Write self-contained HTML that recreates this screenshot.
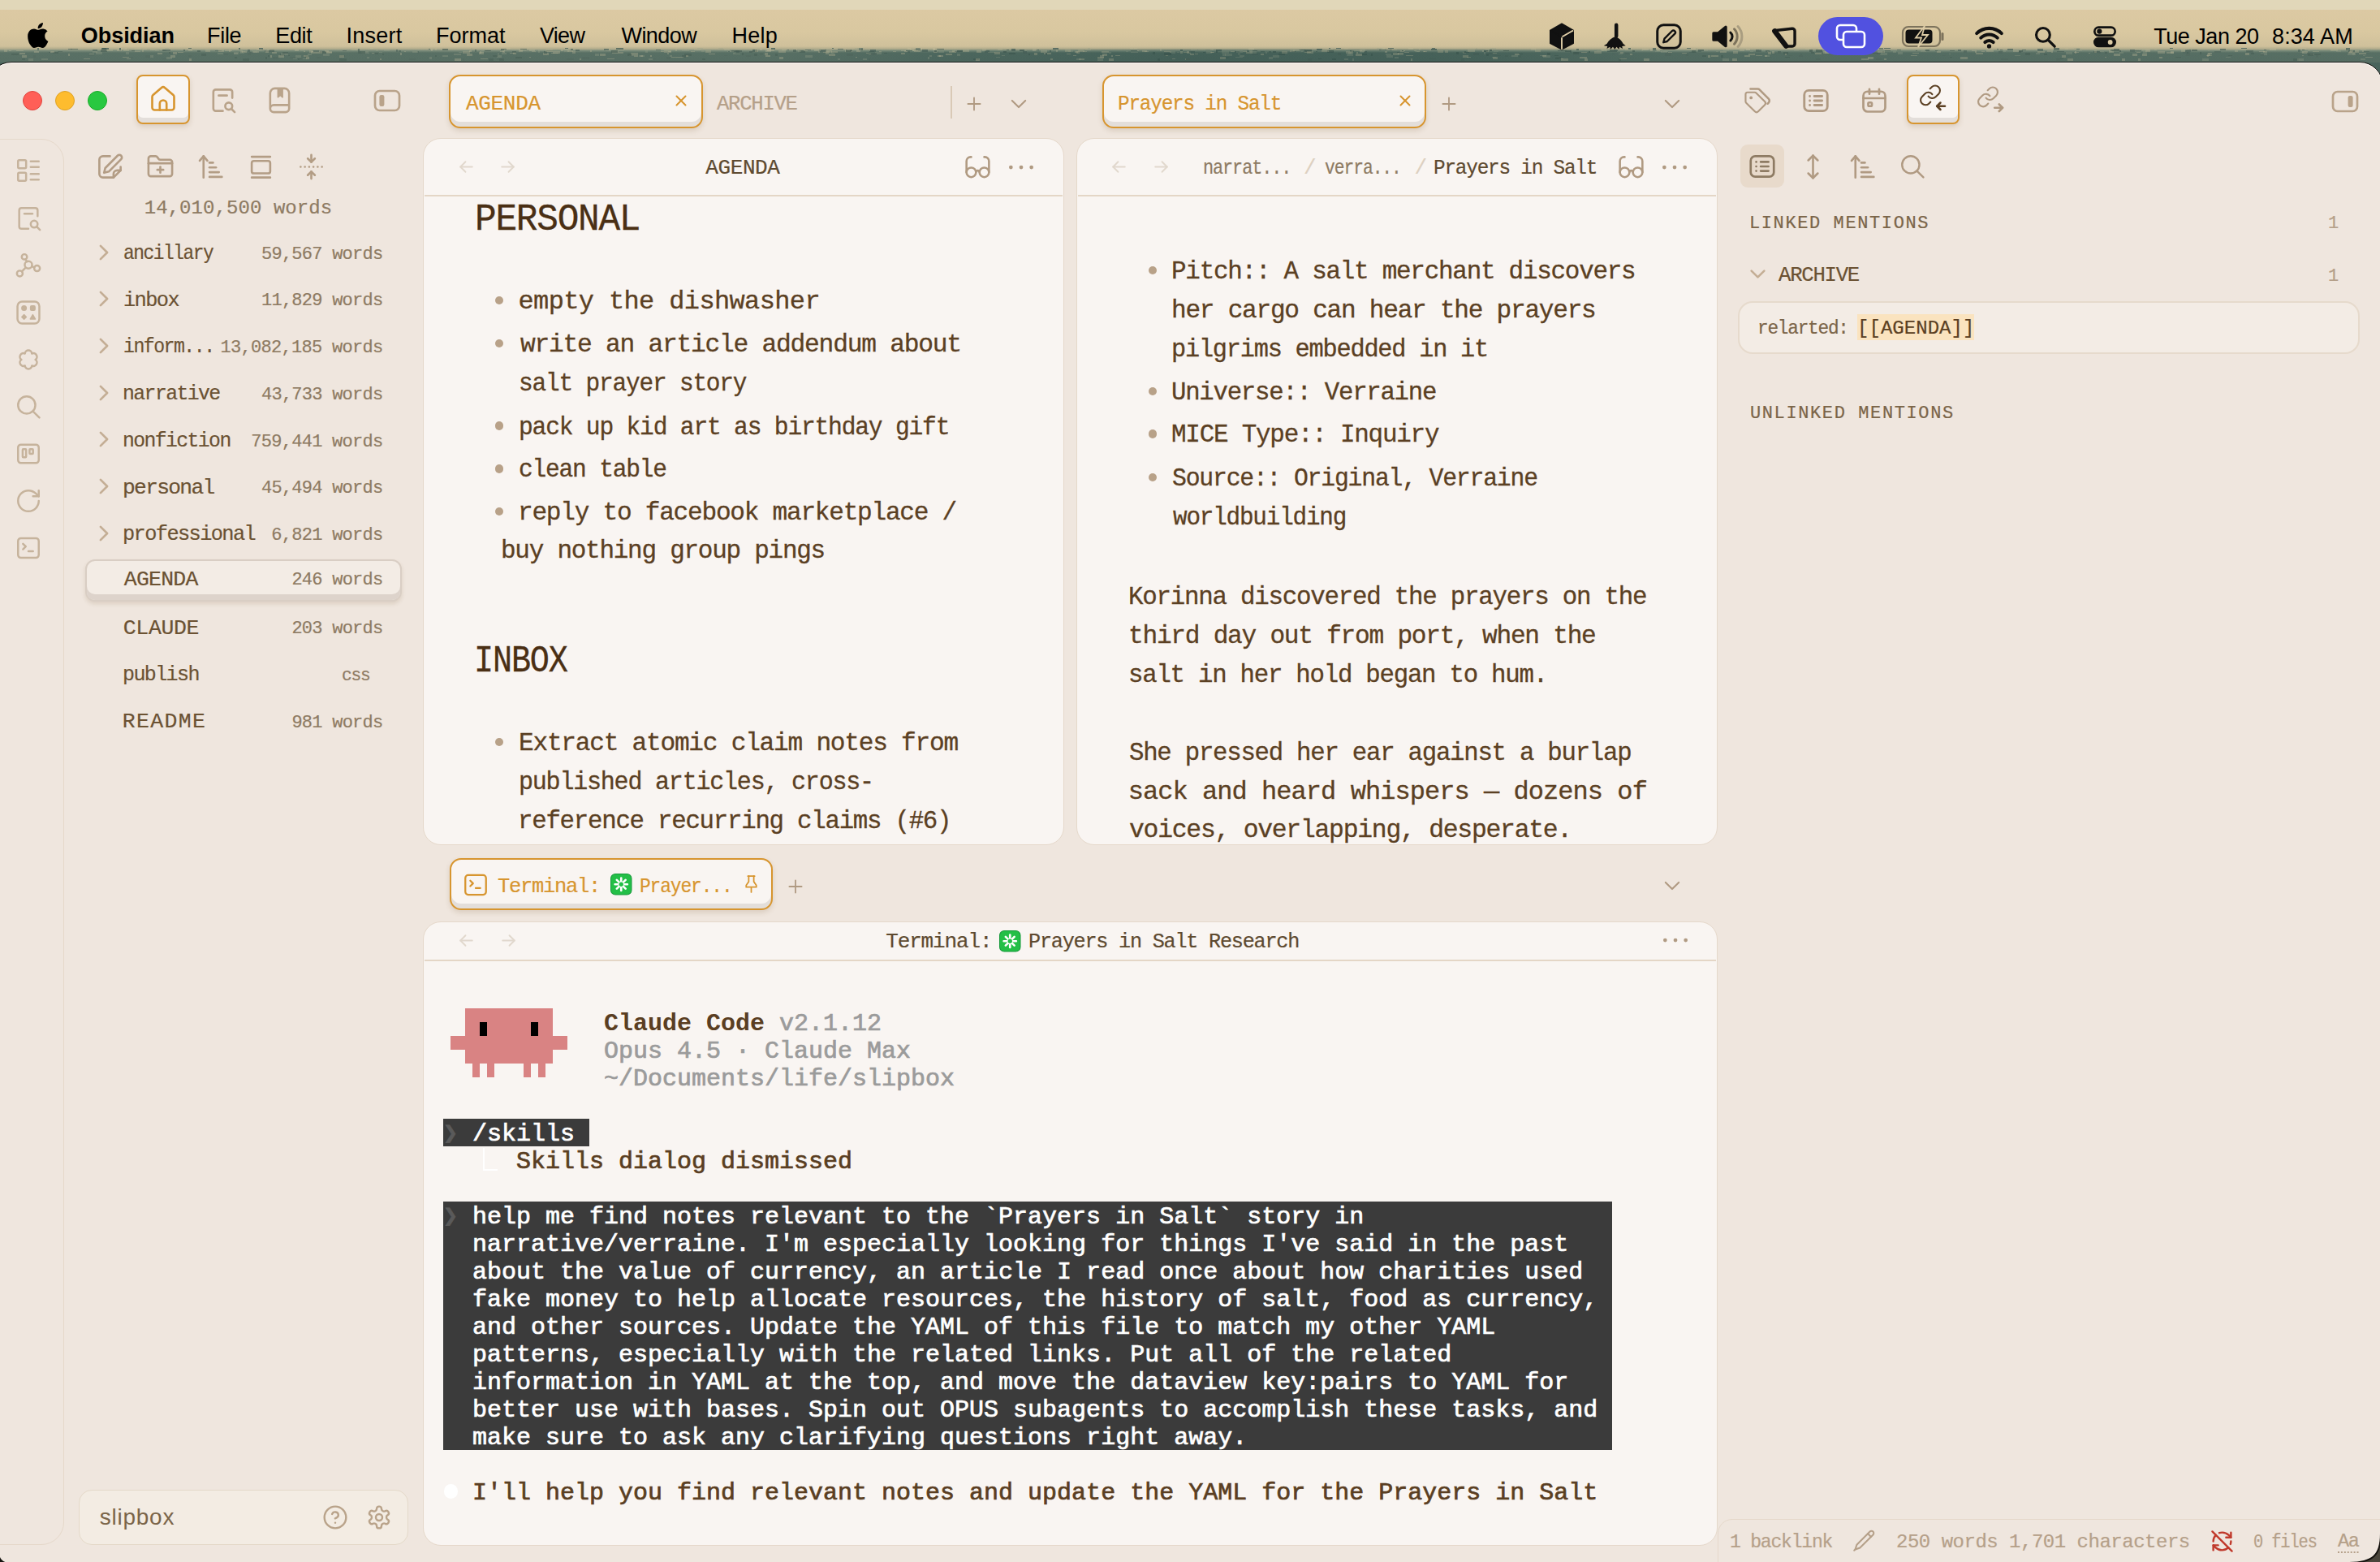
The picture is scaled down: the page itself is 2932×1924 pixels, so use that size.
<!DOCTYPE html>
<html lang="en"><head><meta charset="utf-8"><title>Obsidian</title>
<style>
html,body{margin:0;padding:0}
body{width:2932px;height:1924px;background:#2b2721;font-family:"Liberation Mono","DejaVu Sans Mono",monospace;color:#5B4023}
#screen{position:relative;width:2932px;height:1924px;overflow:hidden;background:#2b2721}
body *{box-sizing:border-box}
div,svg.ic,span.t{position:absolute}
svg.ic{overflow:visible}
span.t{white-space:pre;line-height:1;display:block;transform-origin:0 50%}
span.t{-webkit-text-stroke:.22px}
span.b{-webkit-text-stroke:.32px}
span.s{font-family:"Liberation Sans","DejaVu Sans",sans-serif;-webkit-text-stroke:0}
.pane{background:#F9F5F2;border:1.600px solid #E5D8CA;border-radius:22px}
.hdrline{background:#E4D6C6;height:2px}
.tab{background:#F9F5F2;border:2px solid #D7952F;border-radius:14px;box-shadow:inset 0 -6px 0 #E3DEDA, 0 3px 6px rgba(120,90,50,.18)}
</style></head>
<body>
<div id="screen">
<section id="desktop-wallpaper">
<div class="" style="left:0.0px;top:0.0px;width:2932.0px;height:110.0px;background:linear-gradient(to bottom,#E1D7B9 0,#E1D7B9 11.5px,#DCC9A3 12px,#D9C8A0 40px,#CFC09B 57px,#B3AD8C 60px,#6F8374 62.500px,#4A655C 65px,#44605A 100%)"></div>
<svg class="ic" style="left:0;top:0;width:2932px;height:78px" viewBox="0 0 2932 78"><rect x="1326" y="63" width="4" height="3" fill="rgba(190,185,150,.32)"/><rect x="296" y="62" width="3" height="3" fill="rgba(190,185,150,.32)"/><rect x="2078" y="59" width="5" height="1" fill="rgba(60,85,78,.7)"/><rect x="1712" y="61" width="3" height="1" fill="rgba(70,95,88,.8)"/><rect x="1738" y="72" width="2" height="3" fill="rgba(190,185,150,.32)"/><rect x="914" y="65" width="2" height="3" fill="rgba(60,85,78,.7)"/><rect x="203" y="59" width="5" height="3" fill="rgba(150,160,135,.3)"/><rect x="1186" y="61" width="8" height="3" fill="rgba(190,185,150,.32)"/><rect x="2338" y="64" width="6" height="3" fill="rgba(150,160,135,.3)"/><rect x="422" y="62" width="5" height="1" fill="rgba(70,95,88,.8)"/><rect x="2916" y="65" width="3" height="1" fill="rgba(70,95,88,.8)"/><rect x="843" y="66" width="9" height="3" fill="rgba(60,85,78,.7)"/><rect x="1286" y="65" width="9" height="2" fill="rgba(205,195,160,.3)"/><rect x="1227" y="70" width="5" height="1" fill="rgba(150,160,135,.3)"/><rect x="335" y="64" width="6" height="2" fill="rgba(205,195,160,.3)"/><rect x="1838" y="65" width="6" height="1" fill="rgba(190,185,150,.32)"/><rect x="2096" y="61" width="8" height="2" fill="rgba(150,160,135,.3)"/><rect x="2002" y="59" width="8" height="3" fill="rgba(190,185,150,.32)"/><rect x="2285" y="62" width="7" height="3" fill="rgba(205,195,160,.3)"/><rect x="2434" y="65" width="9" height="2" fill="rgba(190,185,150,.32)"/><rect x="383" y="63" width="6" height="3" fill="rgba(190,185,150,.32)"/><rect x="248" y="66" width="6" height="3" fill="rgba(60,85,78,.7)"/><rect x="1165" y="66" width="8" height="2" fill="rgba(190,185,150,.32)"/><rect x="1891" y="61" width="7" height="3" fill="rgba(190,185,150,.32)"/><rect x="2022" y="61" width="2" height="2" fill="rgba(150,160,135,.3)"/><rect x="1014" y="63" width="8" height="2" fill="rgba(190,185,150,.32)"/><rect x="681" y="63" width="9" height="3" fill="rgba(205,195,160,.3)"/><rect x="560" y="72" width="8" height="3" fill="rgba(205,195,160,.3)"/><rect x="2893" y="62" width="8" height="3" fill="rgba(60,85,78,.7)"/><rect x="945" y="60" width="4" height="1" fill="rgba(150,160,135,.3)"/><rect x="950" y="59" width="5" height="2" fill="rgba(70,95,88,.8)"/><rect x="746" y="62" width="6" height="1" fill="rgba(150,160,135,.3)"/><rect x="1716" y="65" width="7" height="3" fill="rgba(205,195,160,.3)"/><rect x="514" y="63" width="2" height="3" fill="rgba(70,95,88,.8)"/><rect x="1607" y="63" width="8" height="2" fill="rgba(190,185,150,.32)"/><rect x="1972" y="59" width="8" height="1" fill="rgba(190,185,150,.32)"/><rect x="855" y="61" width="9" height="1" fill="rgba(205,195,160,.3)"/><rect x="2460" y="60" width="2" height="1" fill="rgba(70,95,88,.8)"/><rect x="619" y="62" width="3" height="3" fill="rgba(190,185,150,.32)"/><rect x="288" y="65" width="5" height="2" fill="rgba(150,160,135,.3)"/><rect x="2598" y="62" width="6" height="3" fill="rgba(205,195,160,.3)"/><rect x="1942" y="60" width="3" height="2" fill="rgba(60,85,78,.7)"/><rect x="1967" y="62" width="9" height="1" fill="rgba(150,160,135,.3)"/><rect x="418" y="68" width="7" height="2" fill="rgba(60,85,78,.7)"/><rect x="2834" y="64" width="4" height="1" fill="rgba(150,160,135,.3)"/><rect x="2163" y="61" width="7" height="3" fill="rgba(70,95,88,.8)"/><rect x="110" y="66" width="6" height="1" fill="rgba(205,195,160,.3)"/><rect x="2123" y="61" width="7" height="2" fill="rgba(150,160,135,.3)"/><rect x="2181" y="66" width="7" height="1" fill="rgba(70,95,88,.8)"/><rect x="799" y="72" width="5" height="2" fill="rgba(150,160,135,.3)"/><rect x="818" y="62" width="9" height="3" fill="rgba(190,185,150,.32)"/><rect x="114" y="63" width="6" height="2" fill="rgba(150,160,135,.3)"/><rect x="2836" y="63" width="7" height="3" fill="rgba(205,195,160,.3)"/><rect x="1493" y="61" width="3" height="1" fill="rgba(150,160,135,.3)"/><rect x="1925" y="62" width="5" height="1" fill="rgba(60,85,78,.7)"/><rect x="2556" y="63" width="2" height="3" fill="rgba(205,195,160,.3)"/><rect x="2634" y="72" width="3" height="3" fill="rgba(190,185,150,.32)"/><rect x="1591" y="63" width="5" height="1" fill="rgba(60,85,78,.7)"/><rect x="2604" y="60" width="7" height="3" fill="rgba(60,85,78,.7)"/><rect x="1897" y="68" width="8" height="1" fill="rgba(150,160,135,.3)"/><rect x="696" y="59" width="4" height="1" fill="rgba(70,95,88,.8)"/><rect x="1906" y="65" width="4" height="3" fill="rgba(60,85,78,.7)"/><rect x="2692" y="61" width="7" height="3" fill="rgba(70,95,88,.8)"/><rect x="536" y="59" width="2" height="3" fill="rgba(190,185,150,.32)"/><rect x="2156" y="63" width="4" height="1" fill="rgba(150,160,135,.3)"/><rect x="114" y="61" width="6" height="2" fill="rgba(70,95,88,.8)"/><rect x="985" y="62" width="7" height="3" fill="rgba(60,85,78,.7)"/><rect x="536" y="68" width="2" height="2" fill="rgba(60,85,78,.7)"/><rect x="2713" y="72" width="8" height="3" fill="rgba(150,160,135,.3)"/><rect x="2178" y="64" width="4" height="3" fill="rgba(190,185,150,.32)"/><rect x="1802" y="65" width="4" height="1" fill="rgba(150,160,135,.3)"/><rect x="705" y="63" width="4" height="3" fill="rgba(190,185,150,.32)"/><rect x="2279" y="62" width="2" height="3" fill="rgba(70,95,88,.8)"/><rect x="2173" y="70" width="9" height="1" fill="rgba(70,95,88,.8)"/><rect x="232" y="61" width="5" height="2" fill="rgba(190,185,150,.32)"/><rect x="400" y="64" width="9" height="1" fill="rgba(190,185,150,.32)"/><rect x="1815" y="65" width="7" height="3" fill="rgba(70,95,88,.8)"/><rect x="2097" y="68" width="5" height="2" fill="rgba(60,85,78,.7)"/><rect x="2081" y="64" width="9" height="1" fill="rgba(70,95,88,.8)"/><rect x="1063" y="72" width="5" height="2" fill="rgba(150,160,135,.3)"/><rect x="1706" y="63" width="3" height="2" fill="rgba(205,195,160,.3)"/><rect x="297" y="63" width="5" height="1" fill="rgba(150,160,135,.3)"/><rect x="2742" y="70" width="6" height="1" fill="rgba(150,160,135,.3)"/><rect x="2635" y="61" width="7" height="2" fill="rgba(150,160,135,.3)"/><rect x="1915" y="68" width="5" height="1" fill="rgba(60,85,78,.7)"/><rect x="1995" y="66" width="4" height="1" fill="rgba(150,160,135,.3)"/><rect x="2893" y="64" width="8" height="2" fill="rgba(205,195,160,.3)"/><rect x="1725" y="62" width="5" height="2" fill="rgba(190,185,150,.32)"/><rect x="1498" y="62" width="2" height="3" fill="rgba(60,85,78,.7)"/><rect x="1804" y="63" width="2" height="2" fill="rgba(70,95,88,.8)"/><rect x="2555" y="64" width="6" height="1" fill="rgba(190,185,150,.32)"/><rect x="936" y="60" width="3" height="2" fill="rgba(205,195,160,.3)"/><rect x="162" y="62" width="4" height="1" fill="rgba(60,85,78,.7)"/><rect x="2768" y="63" width="6" height="1" fill="rgba(70,95,88,.8)"/><rect x="2108" y="68" width="9" height="2" fill="rgba(190,185,150,.32)"/><rect x="1143" y="70" width="2" height="3" fill="rgba(150,160,135,.3)"/><rect x="1742" y="62" width="3" height="1" fill="rgba(190,185,150,.32)"/><rect x="1067" y="65" width="3" height="1" fill="rgba(190,185,150,.32)"/><rect x="1083" y="63" width="3" height="1" fill="rgba(205,195,160,.3)"/><rect x="2265" y="62" width="8" height="3" fill="rgba(150,160,135,.3)"/><rect x="176" y="60" width="5" height="1" fill="rgba(205,195,160,.3)"/><rect x="206" y="61" width="4" height="2" fill="rgba(205,195,160,.3)"/><rect x="2175" y="62" width="5" height="2" fill="rgba(70,95,88,.8)"/><rect x="2753" y="62" width="4" height="2" fill="rgba(190,185,150,.32)"/><rect x="1025" y="59" width="2" height="1" fill="rgba(70,95,88,.8)"/><rect x="2257" y="64" width="5" height="2" fill="rgba(150,160,135,.3)"/><rect x="1831" y="66" width="3" height="3" fill="rgba(60,85,78,.7)"/><rect x="2689" y="64" width="9" height="2" fill="rgba(70,95,88,.8)"/><rect x="1260" y="61" width="5" height="2" fill="rgba(150,160,135,.3)"/><rect x="2894" y="63" width="4" height="2" fill="rgba(190,185,150,.32)"/><rect x="531" y="60" width="2" height="3" fill="rgba(205,195,160,.3)"/><rect x="1764" y="59" width="4" height="1" fill="rgba(60,85,78,.7)"/><rect x="2072" y="65" width="6" height="1" fill="rgba(205,195,160,.3)"/><rect x="185" y="61" width="9" height="1" fill="rgba(205,195,160,.3)"/><rect x="1826" y="62" width="2" height="2" fill="rgba(205,195,160,.3)"/><rect x="2240" y="61" width="7" height="1" fill="rgba(205,195,160,.3)"/><rect x="892" y="61" width="7" height="1" fill="rgba(205,195,160,.3)"/><rect x="1563" y="63" width="3" height="2" fill="rgba(70,95,88,.8)"/><rect x="2687" y="61" width="5" height="3" fill="rgba(190,185,150,.32)"/><rect x="372" y="72" width="6" height="1" fill="rgba(150,160,135,.3)"/><rect x="1636" y="63" width="2" height="1" fill="rgba(205,195,160,.3)"/><rect x="1246" y="60" width="5" height="3" fill="rgba(70,95,88,.8)"/><rect x="635" y="70" width="8" height="2" fill="rgba(60,85,78,.7)"/><rect x="612" y="68" width="6" height="3" fill="rgba(150,160,135,.3)"/><rect x="179" y="68" width="8" height="3" fill="rgba(70,95,88,.8)"/><rect x="570" y="72" width="2" height="3" fill="rgba(70,95,88,.8)"/><rect x="2913" y="60" width="5" height="1" fill="rgba(190,185,150,.32)"/><rect x="545" y="60" width="7" height="2" fill="rgba(60,85,78,.7)"/><rect x="2287" y="66" width="2" height="1" fill="rgba(70,95,88,.8)"/><rect x="2788" y="63" width="5" height="2" fill="rgba(190,185,150,.32)"/><rect x="1871" y="68" width="3" height="3" fill="rgba(70,95,88,.8)"/><rect x="376" y="68" width="3" height="3" fill="rgba(60,85,78,.7)"/><rect x="1032" y="72" width="3" height="2" fill="rgba(150,160,135,.3)"/><rect x="840" y="68" width="5" height="3" fill="rgba(60,85,78,.7)"/><rect x="2023" y="60" width="8" height="2" fill="rgba(205,195,160,.3)"/><rect x="191" y="60" width="5" height="3" fill="rgba(150,160,135,.3)"/><rect x="1358" y="66" width="6" height="3" fill="rgba(205,195,160,.3)"/><rect x="2544" y="59" width="4" height="2" fill="rgba(190,185,150,.32)"/><rect x="1989" y="66" width="6" height="1" fill="rgba(150,160,135,.3)"/><rect x="2767" y="62" width="9" height="3" fill="rgba(70,95,88,.8)"/><rect x="1169" y="63" width="9" height="2" fill="rgba(190,185,150,.32)"/><rect x="2249" y="62" width="5" height="1" fill="rgba(60,85,78,.7)"/><rect x="71" y="63" width="6" height="1" fill="rgba(70,95,88,.8)"/><rect x="1840" y="63" width="6" height="1" fill="rgba(150,160,135,.3)"/><rect x="305" y="61" width="3" height="3" fill="rgba(70,95,88,.8)"/><rect x="1072" y="61" width="7" height="3" fill="rgba(70,95,88,.8)"/><rect x="1145" y="68" width="3" height="2" fill="rgba(150,160,135,.3)"/><rect x="2039" y="63" width="9" height="1" fill="rgba(150,160,135,.3)"/><rect x="14" y="66" width="9" height="2" fill="rgba(60,85,78,.7)"/><rect x="1236" y="63" width="4" height="2" fill="rgba(60,85,78,.7)"/><rect x="1294" y="72" width="3" height="2" fill="rgba(190,185,150,.32)"/><rect x="1329" y="72" width="7" height="2" fill="rgba(190,185,150,.32)"/><rect x="801" y="68" width="2" height="2" fill="rgba(205,195,160,.3)"/><rect x="1524" y="63" width="3" height="2" fill="rgba(70,95,88,.8)"/><rect x="312" y="63" width="7" height="2" fill="rgba(190,185,150,.32)"/><rect x="1149" y="59" width="3" height="3" fill="rgba(205,195,160,.3)"/><rect x="2600" y="61" width="4" height="2" fill="rgba(60,85,78,.7)"/><rect x="2092" y="61" width="7" height="2" fill="rgba(60,85,78,.7)"/><rect x="118" y="64" width="8" height="3" fill="rgba(150,160,135,.3)"/><rect x="330" y="68" width="2" height="2" fill="rgba(60,85,78,.7)"/><rect x="2518" y="66" width="4" height="2" fill="rgba(60,85,78,.7)"/><rect x="200" y="61" width="4" height="2" fill="rgba(60,85,78,.7)"/><rect x="1407" y="62" width="6" height="2" fill="rgba(205,195,160,.3)"/><rect x="1663" y="62" width="5" height="2" fill="rgba(70,95,88,.8)"/><rect x="2739" y="60" width="8" height="1" fill="rgba(150,160,135,.3)"/><rect x="307" y="64" width="5" height="2" fill="rgba(70,95,88,.8)"/><rect x="901" y="62" width="9" height="2" fill="rgba(60,85,78,.7)"/><rect x="571" y="61" width="5" height="1" fill="rgba(150,160,135,.3)"/><rect x="1400" y="62" width="3" height="1" fill="rgba(205,195,160,.3)"/><rect x="1058" y="59" width="5" height="3" fill="rgba(60,85,78,.7)"/><rect x="1568" y="68" width="8" height="3" fill="rgba(150,160,135,.3)"/><rect x="1543" y="62" width="6" height="1" fill="rgba(60,85,78,.7)"/><rect x="1136" y="61" width="7" height="3" fill="rgba(70,95,88,.8)"/><rect x="2167" y="60" width="5" height="2" fill="rgba(150,160,135,.3)"/><rect x="1575" y="66" width="8" height="2" fill="rgba(60,85,78,.7)"/><rect x="1278" y="61" width="2" height="1" fill="rgba(60,85,78,.7)"/><rect x="2906" y="65" width="9" height="2" fill="rgba(190,185,150,.32)"/><rect x="299" y="72" width="8" height="3" fill="rgba(60,85,78,.7)"/><rect x="1838" y="70" width="5" height="1" fill="rgba(150,160,135,.3)"/><rect x="632" y="64" width="4" height="3" fill="rgba(190,185,150,.32)"/><rect x="2871" y="60" width="9" height="3" fill="rgba(190,185,150,.32)"/><rect x="5" y="61" width="4" height="3" fill="rgba(190,185,150,.32)"/><rect x="2643" y="61" width="6" height="3" fill="rgba(205,195,160,.3)"/><rect x="2163" y="68" width="8" height="1" fill="rgba(190,185,150,.32)"/><rect x="288" y="64" width="6" height="3" fill="rgba(150,160,135,.3)"/><rect x="1589" y="61" width="6" height="3" fill="rgba(190,185,150,.32)"/><rect x="42" y="63" width="6" height="2" fill="rgba(205,195,160,.3)"/><rect x="2640" y="63" width="5" height="3" fill="rgba(150,160,135,.3)"/><rect x="2240" y="59" width="5" height="2" fill="rgba(205,195,160,.3)"/><rect x="226" y="61" width="2" height="2" fill="rgba(60,85,78,.7)"/><rect x="332" y="61" width="6" height="3" fill="rgba(60,85,78,.7)"/><rect x="1516" y="63" width="5" height="1" fill="rgba(205,195,160,.3)"/><rect x="1722" y="66" width="7" height="2" fill="rgba(150,160,135,.3)"/><rect x="27" y="68" width="6" height="3" fill="rgba(190,185,150,.32)"/><rect x="840" y="61" width="9" height="2" fill="rgba(150,160,135,.3)"/><rect x="945" y="61" width="9" height="2" fill="rgba(205,195,160,.3)"/><rect x="446" y="65" width="9" height="1" fill="rgba(150,160,135,.3)"/><rect x="1986" y="66" width="8" height="1" fill="rgba(70,95,88,.8)"/><rect x="599" y="59" width="8" height="1" fill="rgba(190,185,150,.32)"/><rect x="2441" y="63" width="4" height="1" fill="rgba(190,185,150,.32)"/><rect x="754" y="63" width="8" height="3" fill="rgba(205,195,160,.3)"/><rect x="463" y="61" width="3" height="2" fill="rgba(150,160,135,.3)"/><rect x="759" y="59" width="9" height="2" fill="rgba(60,85,78,.7)"/><rect x="1531" y="63" width="7" height="1" fill="rgba(190,185,150,.32)"/><rect x="11" y="62" width="3" height="1" fill="rgba(205,195,160,.3)"/><rect x="1721" y="64" width="3" height="1" fill="rgba(60,85,78,.7)"/><rect x="1460" y="72" width="6" height="2" fill="rgba(190,185,150,.32)"/><rect x="201" y="61" width="9" height="2" fill="rgba(70,95,88,.8)"/><rect x="1828" y="62" width="5" height="2" fill="rgba(60,85,78,.7)"/><rect x="124" y="61" width="8" height="3" fill="rgba(60,85,78,.7)"/><rect x="166" y="59" width="8" height="2" fill="rgba(190,185,150,.32)"/><rect x="253" y="61" width="6" height="3" fill="rgba(190,185,150,.32)"/><rect x="2480" y="62" width="7" height="2" fill="rgba(205,195,160,.3)"/><rect x="2527" y="62" width="2" height="3" fill="rgba(205,195,160,.3)"/><rect x="1128" y="59" width="6" height="3" fill="rgba(70,95,88,.8)"/><rect x="2596" y="59" width="3" height="1" fill="rgba(190,185,150,.32)"/><rect x="1946" y="70" width="9" height="2" fill="rgba(205,195,160,.3)"/><rect x="1761" y="61" width="9" height="2" fill="rgba(150,160,135,.3)"/><rect x="35" y="72" width="6" height="3" fill="rgba(150,160,135,.3)"/><rect x="2487" y="62" width="5" height="2" fill="rgba(60,85,78,.7)"/><rect x="1482" y="64" width="3" height="1" fill="rgba(60,85,78,.7)"/><rect x="655" y="63" width="5" height="1" fill="rgba(190,185,150,.32)"/><rect x="1973" y="61" width="7" height="2" fill="rgba(190,185,150,.32)"/><rect x="295" y="65" width="6" height="1" fill="rgba(150,160,135,.3)"/><rect x="394" y="63" width="8" height="3" fill="rgba(60,85,78,.7)"/><rect x="709" y="61" width="5" height="2" fill="rgba(60,85,78,.7)"/><rect x="2540" y="68" width="5" height="3" fill="rgba(190,185,150,.32)"/><rect x="1203" y="62" width="6" height="3" fill="rgba(205,195,160,.3)"/><rect x="1527" y="68" width="6" height="2" fill="rgba(150,160,135,.3)"/><rect x="1799" y="61" width="5" height="1" fill="rgba(150,160,135,.3)"/><rect x="628" y="65" width="6" height="1" fill="rgba(205,195,160,.3)"/><rect x="265" y="62" width="8" height="1" fill="rgba(70,95,88,.8)"/><rect x="2155" y="66" width="5" height="1" fill="rgba(60,85,78,.7)"/><rect x="151" y="59" width="3" height="2" fill="rgba(150,160,135,.3)"/><rect x="1836" y="59" width="7" height="2" fill="rgba(150,160,135,.3)"/><rect x="488" y="61" width="2" height="3" fill="rgba(70,95,88,.8)"/><rect x="795" y="62" width="3" height="3" fill="rgba(150,160,135,.3)"/><rect x="1839" y="70" width="6" height="3" fill="rgba(190,185,150,.32)"/><rect x="433" y="61" width="7" height="1" fill="rgba(205,195,160,.3)"/><rect x="1392" y="59" width="4" height="1" fill="rgba(205,195,160,.3)"/><rect x="156" y="72" width="5" height="1" fill="rgba(205,195,160,.3)"/><rect x="1675" y="61" width="7" height="3" fill="rgba(205,195,160,.3)"/><rect x="319" y="59" width="5" height="2" fill="rgba(70,95,88,.8)"/><rect x="1980" y="63" width="3" height="1" fill="rgba(60,85,78,.7)"/><rect x="2719" y="66" width="4" height="3" fill="rgba(190,185,150,.32)"/><rect x="2674" y="63" width="4" height="3" fill="rgba(205,195,160,.3)"/><rect x="1678" y="66" width="6" height="2" fill="rgba(60,85,78,.7)"/><rect x="210" y="68" width="6" height="3" fill="rgba(205,195,160,.3)"/><rect x="1696" y="59" width="8" height="2" fill="rgba(150,160,135,.3)"/><rect x="1600" y="61" width="8" height="1" fill="rgba(60,85,78,.7)"/><rect x="641" y="60" width="8" height="1" fill="rgba(60,85,78,.7)"/><rect x="2366" y="63" width="7" height="1" fill="rgba(150,160,135,.3)"/><rect x="60" y="64" width="2" height="1" fill="rgba(60,85,78,.7)"/><rect x="364" y="68" width="7" height="3" fill="rgba(150,160,135,.3)"/><rect x="597" y="62" width="7" height="1" fill="rgba(70,95,88,.8)"/><rect x="703" y="60" width="3" height="2" fill="rgba(60,85,78,.7)"/><rect x="808" y="61" width="6" height="1" fill="rgba(60,85,78,.7)"/><rect x="1288" y="65" width="2" height="3" fill="rgba(60,85,78,.7)"/><rect x="353" y="66" width="4" height="1" fill="rgba(70,95,88,.8)"/><rect x="1656" y="72" width="5" height="2" fill="rgba(150,160,135,.3)"/><rect x="2315" y="59" width="5" height="2" fill="rgba(70,95,88,.8)"/><rect x="640" y="62" width="8" height="1" fill="rgba(150,160,135,.3)"/><rect x="1011" y="59" width="5" height="3" fill="rgba(190,185,150,.32)"/><rect x="2735" y="60" width="7" height="2" fill="rgba(70,95,88,.8)"/><rect x="1866" y="66" width="6" height="2" fill="rgba(205,195,160,.3)"/><rect x="2386" y="63" width="5" height="2" fill="rgba(205,195,160,.3)"/><rect x="1830" y="61" width="9" height="1" fill="rgba(190,185,150,.32)"/><rect x="2534" y="63" width="9" height="1" fill="rgba(60,85,78,.7)"/><rect x="2533" y="72" width="9" height="1" fill="rgba(60,85,78,.7)"/><rect x="1639" y="60" width="3" height="1" fill="rgba(205,195,160,.3)"/><rect x="1763" y="60" width="7" height="2" fill="rgba(70,95,88,.8)"/><rect x="2089" y="59" width="2" height="3" fill="rgba(150,160,135,.3)"/><rect x="336" y="70" width="7" height="3" fill="rgba(70,95,88,.8)"/><rect x="327" y="70" width="2" height="3" fill="rgba(60,85,78,.7)"/><rect x="2673" y="59" width="4" height="1" fill="rgba(70,95,88,.8)"/><rect x="2836" y="61" width="3" height="1" fill="rgba(60,85,78,.7)"/><rect x="1179" y="66" width="4" height="3" fill="rgba(150,160,135,.3)"/><rect x="268" y="65" width="7" height="2" fill="rgba(150,160,135,.3)"/><rect x="1326" y="72" width="6" height="2" fill="rgba(150,160,135,.3)"/><rect x="1041" y="61" width="9" height="3" fill="rgba(205,195,160,.3)"/><rect x="2522" y="62" width="5" height="2" fill="rgba(190,185,150,.32)"/><rect x="814" y="63" width="4" height="1" fill="rgba(205,195,160,.3)"/><rect x="2783" y="63" width="7" height="1" fill="rgba(205,195,160,.3)"/><rect x="471" y="66" width="2" height="2" fill="rgba(60,85,78,.7)"/><rect x="2274" y="62" width="3" height="3" fill="rgba(60,85,78,.7)"/><rect x="1521" y="63" width="6" height="2" fill="rgba(70,95,88,.8)"/><rect x="598" y="62" width="7" height="1" fill="rgba(60,85,78,.7)"/><rect x="942" y="65" width="4" height="3" fill="rgba(190,185,150,.32)"/><rect x="1213" y="62" width="6" height="3" fill="rgba(70,95,88,.8)"/><rect x="2718" y="68" width="7" height="1" fill="rgba(190,185,150,.32)"/><rect x="907" y="62" width="4" height="3" fill="rgba(60,85,78,.7)"/><rect x="1710" y="59" width="7" height="1" fill="rgba(60,85,78,.7)"/><rect x="930" y="59" width="2" height="1" fill="rgba(190,185,150,.32)"/><rect x="2322" y="62" width="7" height="1" fill="rgba(70,95,88,.8)"/><rect x="1462" y="63" width="5" height="3" fill="rgba(205,195,160,.3)"/><rect x="2412" y="61" width="4" height="2" fill="rgba(70,95,88,.8)"/><rect x="1945" y="61" width="4" height="1" fill="rgba(150,160,135,.3)"/><rect x="2897" y="63" width="4" height="1" fill="rgba(190,185,150,.32)"/><rect x="2614" y="72" width="4" height="3" fill="rgba(205,195,160,.3)"/><rect x="1646" y="59" width="6" height="1" fill="rgba(70,95,88,.8)"/><rect x="1434" y="65" width="9" height="3" fill="rgba(60,85,78,.7)"/><rect x="1017" y="59" width="4" height="1" fill="rgba(190,185,150,.32)"/><rect x="2177" y="63" width="2" height="1" fill="rgba(150,160,135,.3)"/><rect x="652" y="70" width="2" height="1" fill="rgba(190,185,150,.32)"/><rect x="2509" y="61" width="5" height="2" fill="rgba(150,160,135,.3)"/><rect x="2122" y="72" width="8" height="3" fill="rgba(150,160,135,.3)"/><rect x="2083" y="60" width="6" height="2" fill="rgba(190,185,150,.32)"/><rect x="1957" y="63" width="2" height="2" fill="rgba(60,85,78,.7)"/><rect x="329" y="61" width="9" height="1" fill="rgba(190,185,150,.32)"/><rect x="1070" y="66" width="5" height="1" fill="rgba(190,185,150,.32)"/><rect x="1374" y="68" width="6" height="1" fill="rgba(205,195,160,.3)"/><rect x="2604" y="66" width="8" height="3" fill="rgba(205,195,160,.3)"/><rect x="1210" y="60" width="5" height="3" fill="rgba(190,185,150,.32)"/><rect x="695" y="61" width="6" height="3" fill="rgba(150,160,135,.3)"/><rect x="652" y="61" width="7" height="2" fill="rgba(205,195,160,.3)"/><rect x="2462" y="63" width="5" height="3" fill="rgba(70,95,88,.8)"/><rect x="1923" y="72" width="9" height="3" fill="rgba(190,185,150,.32)"/><rect x="108" y="68" width="8" height="1" fill="rgba(70,95,88,.8)"/><rect x="1260" y="63" width="5" height="3" fill="rgba(70,95,88,.8)"/><rect x="318" y="61" width="4" height="1" fill="rgba(190,185,150,.32)"/><rect x="458" y="65" width="3" height="1" fill="rgba(205,195,160,.3)"/><rect x="580" y="59" width="2" height="1" fill="rgba(150,160,135,.3)"/><rect x="2836" y="68" width="2" height="1" fill="rgba(190,185,150,.32)"/><rect x="269" y="61" width="7" height="3" fill="rgba(190,185,150,.32)"/><rect x="2913" y="60" width="8" height="1" fill="rgba(150,160,135,.3)"/><rect x="832" y="59" width="3" height="1" fill="rgba(190,185,150,.32)"/><rect x="2586" y="63" width="6" height="1" fill="rgba(150,160,135,.3)"/><rect x="400" y="62" width="5" height="2" fill="rgba(205,195,160,.3)"/><rect x="1735" y="59" width="6" height="2" fill="rgba(205,195,160,.3)"/><rect x="1157" y="68" width="2" height="2" fill="rgba(205,195,160,.3)"/><rect x="2465" y="72" width="9" height="2" fill="rgba(70,95,88,.8)"/><rect x="126" y="59" width="8" height="2" fill="rgba(70,95,88,.8)"/><rect x="402" y="63" width="7" height="3" fill="rgba(190,185,150,.32)"/><rect x="2203" y="68" width="5" height="1" fill="rgba(70,95,88,.8)"/><rect x="1176" y="63" width="4" height="1" fill="rgba(70,95,88,.8)"/><rect x="827" y="70" width="6" height="1" fill="rgba(190,185,150,.32)"/><rect x="1424" y="60" width="9" height="2" fill="rgba(150,160,135,.3)"/><rect x="2025" y="72" width="7" height="3" fill="rgba(205,195,160,.3)"/><rect x="2367" y="62" width="4" height="1" fill="rgba(150,160,135,.3)"/><rect x="2041" y="60" width="4" height="3" fill="rgba(190,185,150,.32)"/><rect x="2008" y="66" width="3" height="2" fill="rgba(205,195,160,.3)"/><rect x="389" y="63" width="8" height="3" fill="rgba(190,185,150,.32)"/><rect x="1729" y="62" width="2" height="1" fill="rgba(205,195,160,.3)"/><rect x="1078" y="64" width="8" height="3" fill="rgba(150,160,135,.3)"/><rect x="1553" y="63" width="5" height="1" fill="rgba(70,95,88,.8)"/><rect x="2433" y="62" width="2" height="3" fill="rgba(205,195,160,.3)"/><rect x="2137" y="72" width="4" height="2" fill="rgba(70,95,88,.8)"/><rect x="1324" y="63" width="4" height="2" fill="rgba(205,195,160,.3)"/><rect x="2372" y="61" width="5" height="2" fill="rgba(60,85,78,.7)"/><rect x="2632" y="64" width="5" height="1" fill="rgba(205,195,160,.3)"/><rect x="1234" y="68" width="4" height="1" fill="rgba(150,160,135,.3)"/><rect x="1337" y="61" width="7" height="1" fill="rgba(205,195,160,.3)"/><rect x="775" y="68" width="6" height="1" fill="rgba(150,160,135,.3)"/><rect x="2694" y="61" width="3" height="2" fill="rgba(150,160,135,.3)"/><rect x="607" y="68" width="6" height="2" fill="rgba(60,85,78,.7)"/><rect x="1121" y="60" width="5" height="3" fill="rgba(190,185,150,.32)"/><rect x="1150" y="63" width="5" height="2" fill="rgba(190,185,150,.32)"/><rect x="51" y="72" width="8" height="2" fill="rgba(150,160,135,.3)"/><rect x="2049" y="63" width="6" height="1" fill="rgba(150,160,135,.3)"/><rect x="1053" y="59" width="8" height="3" fill="rgba(150,160,135,.3)"/><rect x="1761" y="72" width="8" height="1" fill="rgba(70,95,88,.8)"/><rect x="936" y="66" width="4" height="1" fill="rgba(60,85,78,.7)"/><rect x="1771" y="62" width="7" height="3" fill="rgba(190,185,150,.32)"/><rect x="1718" y="70" width="5" height="2" fill="rgba(150,160,135,.3)"/><rect x="1024" y="63" width="8" height="2" fill="rgba(190,185,150,.32)"/><rect x="2545" y="64" width="8" height="3" fill="rgba(150,160,135,.3)"/><rect x="2680" y="70" width="7" height="1" fill="rgba(60,85,78,.7)"/><rect x="2006" y="59" width="3" height="2" fill="rgba(70,95,88,.8)"/><rect x="892" y="68" width="4" height="1" fill="rgba(70,95,88,.8)"/><rect x="1426" y="72" width="3" height="3" fill="rgba(60,85,78,.7)"/><rect x="2216" y="68" width="5" height="2" fill="rgba(70,95,88,.8)"/><rect x="65" y="64" width="7" height="2" fill="rgba(60,85,78,.7)"/><rect x="1871" y="66" width="5" height="1" fill="rgba(60,85,78,.7)"/><rect x="2104" y="68" width="3" height="3" fill="rgba(205,195,160,.3)"/><rect x="2611" y="62" width="2" height="2" fill="rgba(60,85,78,.7)"/><rect x="1637" y="59" width="2" height="1" fill="rgba(60,85,78,.7)"/><rect x="1722" y="65" width="7" height="2" fill="rgba(190,185,150,.32)"/><rect x="919" y="68" width="6" height="2" fill="rgba(70,95,88,.8)"/><rect x="896" y="63" width="8" height="1" fill="rgba(150,160,135,.3)"/><rect x="529" y="70" width="3" height="3" fill="rgba(150,160,135,.3)"/><rect x="1921" y="72" width="5" height="1" fill="rgba(205,195,160,.3)"/><rect x="2728" y="63" width="8" height="2" fill="rgba(70,95,88,.8)"/><rect x="2660" y="70" width="4" height="2" fill="rgba(205,195,160,.3)"/><rect x="943" y="68" width="6" height="2" fill="rgba(205,195,160,.3)"/><rect x="1745" y="63" width="4" height="1" fill="rgba(205,195,160,.3)"/><rect x="1466" y="66" width="5" height="2" fill="rgba(205,195,160,.3)"/><rect x="1964" y="63" width="9" height="3" fill="rgba(190,185,150,.32)"/><rect x="2700" y="61" width="7" height="2" fill="rgba(60,85,78,.7)"/><rect x="233" y="72" width="3" height="3" fill="rgba(205,195,160,.3)"/><rect x="575" y="66" width="7" height="3" fill="rgba(190,185,150,.32)"/><rect x="2692" y="61" width="2" height="1" fill="rgba(205,195,160,.3)"/><rect x="1024" y="65" width="3" height="1" fill="rgba(150,160,135,.3)"/><rect x="760" y="62" width="9" height="1" fill="rgba(150,160,135,.3)"/><rect x="1648" y="65" width="4" height="3" fill="rgba(70,95,88,.8)"/><rect x="370" y="61" width="6" height="2" fill="rgba(150,160,135,.3)"/><rect x="2174" y="68" width="3" height="2" fill="rgba(190,185,150,.32)"/><rect x="2273" y="62" width="3" height="2" fill="rgba(150,160,135,.3)"/><rect x="570" y="63" width="9" height="3" fill="rgba(190,185,150,.32)"/><rect x="1983" y="61" width="9" height="3" fill="rgba(60,85,78,.7)"/><rect x="1009" y="61" width="9" height="3" fill="rgba(70,95,88,.8)"/><rect x="27" y="72" width="4" height="2" fill="rgba(60,85,78,.7)"/><rect x="2850" y="66" width="9" height="2" fill="rgba(60,85,78,.7)"/><rect x="1535" y="63" width="8" height="3" fill="rgba(190,185,150,.32)"/><rect x="739" y="66" width="7" height="3" fill="rgba(190,185,150,.32)"/><rect x="84" y="66" width="2" height="3" fill="rgba(205,195,160,.3)"/><rect x="384" y="63" width="9" height="1" fill="rgba(190,185,150,.32)"/><rect x="873" y="66" width="8" height="1" fill="rgba(205,195,160,.3)"/><rect x="386" y="62" width="7" height="2" fill="rgba(70,95,88,.8)"/><rect x="2269" y="62" width="5" height="2" fill="rgba(205,195,160,.3)"/><rect x="1730" y="64" width="6" height="1" fill="rgba(205,195,160,.3)"/><rect x="1199" y="72" width="7" height="2" fill="rgba(60,85,78,.7)"/><rect x="1366" y="72" width="6" height="3" fill="rgba(205,195,160,.3)"/><rect x="833" y="70" width="9" height="1" fill="rgba(205,195,160,.3)"/><rect x="787" y="68" width="7" height="2" fill="rgba(150,160,135,.3)"/><rect x="2402" y="70" width="3" height="1" fill="rgba(60,85,78,.7)"/><rect x="2270" y="64" width="8" height="3" fill="rgba(190,185,150,.32)"/><rect x="1632" y="60" width="6" height="1" fill="rgba(190,185,150,.32)"/><rect x="777" y="65" width="9" height="3" fill="rgba(190,185,150,.32)"/><rect x="2051" y="65" width="8" height="1" fill="rgba(70,95,88,.8)"/><rect x="2789" y="61" width="3" height="1" fill="rgba(60,85,78,.7)"/><rect x="2561" y="60" width="4" height="3" fill="rgba(150,160,135,.3)"/><rect x="151" y="70" width="8" height="1" fill="rgba(190,185,150,.32)"/><rect x="1510" y="70" width="4" height="2" fill="rgba(70,95,88,.8)"/><rect x="2908" y="72" width="6" height="2" fill="rgba(150,160,135,.3)"/><rect x="1727" y="62" width="2" height="1" fill="rgba(60,85,78,.7)"/><rect x="2319" y="63" width="2" height="3" fill="rgba(70,95,88,.8)"/><rect x="161" y="70" width="3" height="2" fill="rgba(70,95,88,.8)"/><rect x="2849" y="63" width="8" height="1" fill="rgba(190,185,150,.32)"/><rect x="2785" y="65" width="8" height="3" fill="rgba(150,160,135,.3)"/><rect x="1947" y="64" width="8" height="1" fill="rgba(190,185,150,.32)"/><rect x="2639" y="61" width="9" height="1" fill="rgba(190,185,150,.32)"/><rect x="1748" y="59" width="2" height="3" fill="rgba(190,185,150,.32)"/><rect x="361" y="72" width="5" height="1" fill="rgba(150,160,135,.3)"/><rect x="1934" y="62" width="2" height="3" fill="rgba(70,95,88,.8)"/><rect x="992" y="68" width="9" height="3" fill="rgba(150,160,135,.3)"/><rect x="205" y="70" width="7" height="3" fill="rgba(150,160,135,.3)"/><rect x="345" y="66" width="6" height="3" fill="rgba(60,85,78,.7)"/><rect x="1886" y="59" width="6" height="3" fill="rgba(190,185,150,.32)"/><rect x="46" y="59" width="2" height="3" fill="rgba(70,95,88,.8)"/><rect x="326" y="62" width="8" height="2" fill="rgba(70,95,88,.8)"/><rect x="679" y="65" width="9" height="1" fill="rgba(205,195,160,.3)"/><rect x="1505" y="63" width="9" height="3" fill="rgba(150,160,135,.3)"/><rect x="593" y="62" width="3" height="3" fill="rgba(150,160,135,.3)"/><rect x="2579" y="63" width="8" height="2" fill="rgba(60,85,78,.7)"/><rect x="1114" y="62" width="7" height="2" fill="rgba(190,185,150,.32)"/><rect x="2547" y="72" width="7" height="3" fill="rgba(190,185,150,.32)"/><rect x="618" y="65" width="6" height="2" fill="rgba(150,160,135,.3)"/><rect x="1542" y="66" width="8" height="2" fill="rgba(70,95,88,.8)"/><rect x="959" y="62" width="9" height="3" fill="rgba(190,185,150,.32)"/><rect x="1316" y="62" width="6" height="2" fill="rgba(150,160,135,.3)"/><rect x="2402" y="62" width="2" height="1" fill="rgba(70,95,88,.8)"/><rect x="602" y="72" width="6" height="3" fill="rgba(60,85,78,.7)"/><rect x="1420" y="64" width="3" height="3" fill="rgba(60,85,78,.7)"/><rect x="1563" y="70" width="5" height="3" fill="rgba(150,160,135,.3)"/><rect x="1267" y="66" width="2" height="2" fill="rgba(60,85,78,.7)"/><rect x="2901" y="62" width="5" height="3" fill="rgba(190,185,150,.32)"/><rect x="1576" y="64" width="9" height="1" fill="rgba(70,95,88,.8)"/><rect x="1454" y="61" width="3" height="2" fill="rgba(70,95,88,.8)"/><rect x="2134" y="72" width="6" height="3" fill="rgba(205,195,160,.3)"/><rect x="1952" y="61" width="5" height="1" fill="rgba(150,160,135,.3)"/><rect x="377" y="70" width="4" height="3" fill="rgba(205,195,160,.3)"/><rect x="1486" y="63" width="7" height="3" fill="rgba(150,160,135,.3)"/><rect x="1008" y="63" width="2" height="2" fill="rgba(190,185,150,.32)"/><rect x="1522" y="70" width="9" height="1" fill="rgba(150,160,135,.3)"/><rect x="1293" y="62" width="2" height="2" fill="rgba(70,95,88,.8)"/><rect x="2486" y="60" width="2" height="1" fill="rgba(150,160,135,.3)"/><rect x="2316" y="65" width="9" height="3" fill="rgba(150,160,135,.3)"/><rect x="1071" y="63" width="6" height="1" fill="rgba(60,85,78,.7)"/><rect x="2429" y="62" width="4" height="1" fill="rgba(205,195,160,.3)"/><rect x="823" y="63" width="4" height="1" fill="rgba(190,185,150,.32)"/><rect x="208" y="64" width="2" height="2" fill="rgba(60,85,78,.7)"/><rect x="1994" y="72" width="3" height="3" fill="rgba(60,85,78,.7)"/><rect x="491" y="62" width="3" height="2" fill="rgba(70,95,88,.8)"/><rect x="955" y="66" width="3" height="3" fill="rgba(60,85,78,.7)"/><rect x="748" y="72" width="9" height="1" fill="rgba(205,195,160,.3)"/><rect x="963" y="61" width="5" height="1" fill="rgba(205,195,160,.3)"/><rect x="1441" y="64" width="2" height="1" fill="rgba(190,185,150,.32)"/><rect x="1056" y="59" width="9" height="1" fill="rgba(150,160,135,.3)"/><rect x="1301" y="61" width="2" height="3" fill="rgba(205,195,160,.3)"/><rect x="2415" y="70" width="9" height="3" fill="rgba(190,185,150,.32)"/><rect x="1928" y="62" width="7" height="2" fill="rgba(60,85,78,.7)"/><rect x="508" y="63" width="7" height="2" fill="rgba(150,160,135,.3)"/><rect x="1807" y="70" width="5" height="1" fill="rgba(190,185,150,.32)"/><rect x="1916" y="70" width="5" height="1" fill="rgba(150,160,135,.3)"/><rect x="903" y="65" width="3" height="2" fill="rgba(150,160,135,.3)"/><rect x="1831" y="63" width="3" height="1" fill="rgba(190,185,150,.32)"/><rect x="1852" y="62" width="7" height="1" fill="rgba(60,85,78,.7)"/><rect x="473" y="61" width="7" height="2" fill="rgba(150,160,135,.3)"/><rect x="232" y="68" width="4" height="2" fill="rgba(70,95,88,.8)"/><rect x="592" y="72" width="9" height="1" fill="rgba(205,195,160,.3)"/><rect x="1713" y="61" width="8" height="1" fill="rgba(190,185,150,.32)"/><rect x="1110" y="62" width="6" height="1" fill="rgba(205,195,160,.3)"/><rect x="2011" y="62" width="3" height="2" fill="rgba(60,85,78,.7)"/><rect x="467" y="64" width="4" height="1" fill="rgba(150,160,135,.3)"/><rect x="2293" y="72" width="9" height="2" fill="rgba(190,185,150,.32)"/><rect x="1055" y="62" width="5" height="2" fill="rgba(205,195,160,.3)"/><rect x="977" y="60" width="5" height="2" fill="rgba(205,195,160,.3)"/><rect x="1702" y="59" width="4" height="3" fill="rgba(205,195,160,.3)"/><rect x="591" y="63" width="2" height="3" fill="rgba(205,195,160,.3)"/><rect x="2092" y="63" width="4" height="1" fill="rgba(70,95,88,.8)"/><rect x="1173" y="62" width="4" height="2" fill="rgba(190,185,150,.32)"/><rect x="1675" y="62" width="5" height="3" fill="rgba(150,160,135,.3)"/><rect x="565" y="64" width="4" height="1" fill="rgba(150,160,135,.3)"/><rect x="805" y="72" width="3" height="1" fill="rgba(70,95,88,.8)"/><rect x="2029" y="61" width="6" height="1" fill="rgba(150,160,135,.3)"/><rect x="2508" y="65" width="5" height="2" fill="rgba(150,160,135,.3)"/><rect x="41" y="68" width="3" height="3" fill="rgba(70,95,88,.8)"/><rect x="1671" y="64" width="2" height="2" fill="rgba(205,195,160,.3)"/><rect x="1154" y="60" width="9" height="1" fill="rgba(60,85,78,.7)"/><rect x="1952" y="72" width="4" height="3" fill="rgba(205,195,160,.3)"/><rect x="1017" y="65" width="4" height="2" fill="rgba(190,185,150,.32)"/><rect x="669" y="65" width="7" height="3" fill="rgba(190,185,150,.32)"/><rect x="1458" y="64" width="9" height="1" fill="rgba(190,185,150,.32)"/><rect x="1461" y="72" width="5" height="2" fill="rgba(60,85,78,.7)"/><rect x="2360" y="62" width="2" height="1" fill="rgba(60,85,78,.7)"/><rect x="1828" y="64" width="2" height="3" fill="rgba(150,160,135,.3)"/><rect x="84" y="60" width="5" height="1" fill="rgba(70,95,88,.8)"/><rect x="747" y="60" width="4" height="2" fill="rgba(205,195,160,.3)"/><rect x="2274" y="59" width="2" height="1" fill="rgba(150,160,135,.3)"/><rect x="1070" y="72" width="2" height="3" fill="rgba(70,95,88,.8)"/><rect x="1900" y="68" width="5" height="2" fill="rgba(190,185,150,.32)"/><rect x="1436" y="68" width="3" height="1" fill="rgba(190,185,150,.32)"/><rect x="1118" y="63" width="3" height="2" fill="rgba(70,95,88,.8)"/><rect x="2051" y="60" width="6" height="1" fill="rgba(190,185,150,.32)"/><rect x="1661" y="64" width="4" height="3" fill="rgba(150,160,135,.3)"/><rect x="929" y="66" width="4" height="3" fill="rgba(60,85,78,.7)"/><rect x="1624" y="72" width="4" height="1" fill="rgba(60,85,78,.7)"/><rect x="2842" y="65" width="8" height="3" fill="rgba(70,95,88,.8)"/><rect x="148" y="59" width="8" height="2" fill="rgba(205,195,160,.3)"/><rect x="1641" y="72" width="5" height="2" fill="rgba(60,85,78,.7)"/><rect x="2311" y="72" width="7" height="2" fill="rgba(70,95,88,.8)"/><rect x="219" y="64" width="7" height="1" fill="rgba(205,195,160,.3)"/><rect x="1021" y="66" width="8" height="3" fill="rgba(190,185,150,.32)"/><rect x="1492" y="64" width="3" height="1" fill="rgba(190,185,150,.32)"/><rect x="1328" y="61" width="8" height="3" fill="rgba(190,185,150,.32)"/><rect x="923" y="63" width="4" height="2" fill="rgba(60,85,78,.7)"/><rect x="2593" y="70" width="2" height="1" fill="rgba(190,185,150,.32)"/><rect x="2627" y="66" width="6" height="3" fill="rgba(205,195,160,.3)"/><rect x="2573" y="65" width="2" height="1" fill="rgba(205,195,160,.3)"/><rect x="498" y="63" width="2" height="1" fill="rgba(190,185,150,.32)"/><rect x="1177" y="62" width="3" height="2" fill="rgba(150,160,135,.3)"/><rect x="493" y="65" width="2" height="3" fill="rgba(205,195,160,.3)"/><rect x="346" y="65" width="9" height="3" fill="rgba(150,160,135,.3)"/><rect x="1802" y="64" width="3" height="1" fill="rgba(205,195,160,.3)"/><rect x="1665" y="62" width="6" height="1" fill="rgba(190,185,150,.32)"/><rect x="2237" y="72" width="6" height="2" fill="rgba(70,95,88,.8)"/><rect x="2846" y="66" width="5" height="2" fill="rgba(150,160,135,.3)"/><rect x="2246" y="63" width="7" height="3" fill="rgba(205,195,160,.3)"/><rect x="2510" y="63" width="9" height="2" fill="rgba(190,185,150,.32)"/><rect x="992" y="61" width="7" height="1" fill="rgba(70,95,88,.8)"/><rect x="2236" y="65" width="8" height="2" fill="rgba(190,185,150,.32)"/><rect x="1444" y="72" width="4" height="1" fill="rgba(205,195,160,.3)"/><rect x="2280" y="63" width="7" height="2" fill="rgba(205,195,160,.3)"/><rect x="885" y="59" width="6" height="1" fill="rgba(150,160,135,.3)"/><rect x="2257" y="65" width="3" height="2" fill="rgba(60,85,78,.7)"/><rect x="2694" y="64" width="2" height="2" fill="rgba(60,85,78,.7)"/><rect x="1450" y="64" width="3" height="1" fill="rgba(150,160,135,.3)"/><rect x="1707" y="66" width="7" height="2" fill="rgba(150,160,135,.3)"/><rect x="2766" y="65" width="5" height="3" fill="rgba(205,195,160,.3)"/><rect x="2120" y="68" width="3" height="3" fill="rgba(60,85,78,.7)"/><rect x="1100" y="63" width="4" height="1" fill="rgba(190,185,150,.32)"/><rect x="1681" y="63" width="3" height="2" fill="rgba(70,95,88,.8)"/><rect x="612" y="72" width="8" height="2" fill="rgba(70,95,88,.8)"/><rect x="2487" y="63" width="3" height="2" fill="rgba(60,85,78,.7)"/><rect x="1179" y="62" width="7" height="2" fill="rgba(60,85,78,.7)"/><rect x="2154" y="66" width="8" height="2" fill="rgba(190,185,150,.32)"/><rect x="2046" y="63" width="8" height="2" fill="rgba(150,160,135,.3)"/><rect x="2199" y="70" width="6" height="1" fill="rgba(60,85,78,.7)"/><rect x="2356" y="65" width="8" height="1" fill="rgba(190,185,150,.32)"/><rect x="1352" y="72" width="7" height="3" fill="rgba(150,160,135,.3)"/><rect x="1334" y="63" width="5" height="1" fill="rgba(190,185,150,.32)"/><rect x="194" y="65" width="6" height="2" fill="rgba(205,195,160,.3)"/><rect x="2197" y="64" width="6" height="3" fill="rgba(60,85,78,.7)"/><rect x="2119" y="63" width="8" height="2" fill="rgba(205,195,160,.3)"/><rect x="166" y="63" width="7" height="1" fill="rgba(190,185,150,.32)"/><rect x="2151" y="60" width="5" height="2" fill="rgba(205,195,160,.3)"/><rect x="2051" y="66" width="8" height="3" fill="rgba(70,95,88,.8)"/><rect x="631" y="63" width="5" height="2" fill="rgba(60,85,78,.7)"/><rect x="1802" y="68" width="7" height="3" fill="rgba(190,185,150,.32)"/><rect x="699" y="62" width="7" height="2" fill="rgba(190,185,150,.32)"/><rect x="1272" y="60" width="4" height="3" fill="rgba(205,195,160,.3)"/><rect x="2825" y="72" width="7" height="3" fill="rgba(60,85,78,.7)"/><rect x="2584" y="64" width="4" height="2" fill="rgba(70,95,88,.8)"/><rect x="851" y="63" width="5" height="1" fill="rgba(190,185,150,.32)"/><rect x="2580" y="62" width="3" height="3" fill="rgba(190,185,150,.32)"/><rect x="2833" y="59" width="8" height="1" fill="rgba(205,195,160,.3)"/><rect x="2910" y="62" width="2" height="2" fill="rgba(190,185,150,.32)"/><rect x="2401" y="66" width="2" height="1" fill="rgba(150,160,135,.3)"/><rect x="717" y="70" width="9" height="3" fill="rgba(70,95,88,.8)"/><rect x="1089" y="65" width="4" height="1" fill="rgba(60,85,78,.7)"/><rect x="2464" y="61" width="3" height="1" fill="rgba(70,95,88,.8)"/><rect x="2086" y="59" width="3" height="1" fill="rgba(190,185,150,.32)"/><rect x="698" y="72" width="9" height="2" fill="rgba(70,95,88,.8)"/><rect x="1763" y="66" width="2" height="1" fill="rgba(70,95,88,.8)"/><rect x="1322" y="68" width="4" height="1" fill="rgba(205,195,160,.3)"/><rect x="1128" y="59" width="4" height="2" fill="rgba(190,185,150,.32)"/><rect x="2384" y="62" width="3" height="1" fill="rgba(60,85,78,.7)"/><rect x="2555" y="59" width="8" height="1" fill="rgba(150,160,135,.3)"/><rect x="1621" y="63" width="2" height="1" fill="rgba(70,95,88,.8)"/><rect x="976" y="61" width="5" height="1" fill="rgba(150,160,135,.3)"/><rect x="2404" y="62" width="4" height="1" fill="rgba(60,85,78,.7)"/><rect x="1243" y="65" width="8" height="2" fill="rgba(60,85,78,.7)"/><rect x="276" y="66" width="5" height="2" fill="rgba(70,95,88,.8)"/><rect x="906" y="62" width="8" height="2" fill="rgba(60,85,78,.7)"/><rect x="91" y="60" width="5" height="1" fill="rgba(150,160,135,.3)"/><rect x="1467" y="61" width="8" height="1" fill="rgba(205,195,160,.3)"/><rect x="1622" y="60" width="7" height="2" fill="rgba(70,95,88,.8)"/><rect x="1579" y="63" width="7" height="3" fill="rgba(190,185,150,.32)"/><rect x="504" y="72" width="8" height="2" fill="rgba(70,95,88,.8)"/><rect x="1003" y="61" width="8" height="2" fill="rgba(205,195,160,.3)"/><rect x="1410" y="63" width="5" height="1" fill="rgba(205,195,160,.3)"/><rect x="2720" y="62" width="2" height="1" fill="rgba(150,160,135,.3)"/><rect x="2891" y="60" width="4" height="1" fill="rgba(205,195,160,.3)"/><rect x="2231" y="64" width="4" height="2" fill="rgba(60,85,78,.7)"/><rect x="983" y="62" width="4" height="2" fill="rgba(150,160,135,.3)"/><rect x="1659" y="66" width="8" height="3" fill="rgba(150,160,135,.3)"/><rect x="1217" y="64" width="9" height="1" fill="rgba(150,160,135,.3)"/><rect x="1854" y="68" width="4" height="2" fill="rgba(70,95,88,.8)"/><rect x="1803" y="64" width="7" height="1" fill="rgba(60,85,78,.7)"/><rect x="2491" y="61" width="5" height="1" fill="rgba(70,95,88,.8)"/><rect x="374" y="68" width="6" height="2" fill="rgba(190,185,150,.32)"/><rect x="2693" y="62" width="4" height="1" fill="rgba(60,85,78,.7)"/><rect x="2911" y="68" width="3" height="1" fill="rgba(150,160,135,.3)"/><rect x="1314" y="66" width="5" height="1" fill="rgba(190,185,150,.32)"/><rect x="2301" y="70" width="7" height="3" fill="rgba(205,195,160,.3)"/><rect x="789" y="68" width="3" height="2" fill="rgba(190,185,150,.32)"/><rect x="927" y="61" width="6" height="3" fill="rgba(60,85,78,.7)"/><rect x="1156" y="63" width="7" height="2" fill="rgba(150,160,135,.3)"/><rect x="1132" y="59" width="4" height="2" fill="rgba(205,195,160,.3)"/><rect x="1689" y="66" width="2" height="3" fill="rgba(60,85,78,.7)"/><rect x="1017" y="62" width="8" height="3" fill="rgba(190,185,150,.32)"/><rect x="744" y="60" width="6" height="2" fill="rgba(70,95,88,.8)"/><rect x="897" y="63" width="2" height="1" fill="rgba(70,95,88,.8)"/><rect x="663" y="61" width="8" height="2" fill="rgba(150,160,135,.3)"/><rect x="1559" y="64" width="2" height="2" fill="rgba(150,160,135,.3)"/><rect x="2312" y="65" width="5" height="2" fill="rgba(70,95,88,.8)"/><rect x="1043" y="66" width="8" height="3" fill="rgba(70,95,88,.8)"/><rect x="1429" y="60" width="2" height="3" fill="rgba(205,195,160,.3)"/><rect x="175" y="61" width="2" height="3" fill="rgba(190,185,150,.32)"/><rect x="152" y="61" width="7" height="2" fill="rgba(190,185,150,.32)"/><rect x="1708" y="68" width="8" height="3" fill="rgba(150,160,135,.3)"/><rect x="1151" y="62" width="3" height="2" fill="rgba(60,85,78,.7)"/><rect x="1393" y="64" width="9" height="1" fill="rgba(150,160,135,.3)"/><rect x="1754" y="63" width="4" height="1" fill="rgba(190,185,150,.32)"/><rect x="2878" y="61" width="6" height="3" fill="rgba(150,160,135,.3)"/><rect x="2611" y="64" width="5" height="2" fill="rgba(150,160,135,.3)"/><rect x="243" y="62" width="4" height="2" fill="rgba(60,85,78,.7)"/><rect x="379" y="66" width="5" height="2" fill="rgba(150,160,135,.3)"/><rect x="559" y="66" width="9" height="2" fill="rgba(150,160,135,.3)"/><rect x="2890" y="59" width="5" height="3" fill="rgba(60,85,78,.7)"/><rect x="545" y="68" width="7" height="2" fill="rgba(150,160,135,.3)"/><rect x="2898" y="65" width="4" height="3" fill="rgba(150,160,135,.3)"/><rect x="1366" y="64" width="3" height="2" fill="rgba(150,160,135,.3)"/><rect x="2773" y="65" width="4" height="2" fill="rgba(60,85,78,.7)"/><rect x="845" y="68" width="3" height="2" fill="rgba(190,185,150,.32)"/><rect x="1476" y="61" width="9" height="1" fill="rgba(190,185,150,.32)"/><rect x="1150" y="61" width="6" height="1" fill="rgba(205,195,160,.3)"/><rect x="1835" y="61" width="3" height="2" fill="rgba(60,85,78,.7)"/><rect x="1919" y="62" width="7" height="1" fill="rgba(70,95,88,.8)"/><rect x="294" y="59" width="2" height="2" fill="rgba(60,85,78,.7)"/><rect x="343" y="68" width="7" height="3" fill="rgba(205,195,160,.3)"/><rect x="445" y="63" width="9" height="2" fill="rgba(150,160,135,.3)"/><rect x="2224" y="59" width="7" height="2" fill="rgba(190,185,150,.32)"/><rect x="2639" y="66" width="6" height="3" fill="rgba(205,195,160,.3)"/><rect x="2674" y="60" width="5" height="1" fill="rgba(190,185,150,.32)"/><rect x="103" y="72" width="8" height="1" fill="rgba(205,195,160,.3)"/><rect x="1506" y="66" width="4" height="3" fill="rgba(150,160,135,.3)"/><rect x="418" y="68" width="6" height="3" fill="rgba(205,195,160,.3)"/><rect x="1553" y="66" width="4" height="2" fill="rgba(205,195,160,.3)"/><rect x="943" y="61" width="7" height="3" fill="rgba(205,195,160,.3)"/><rect x="1038" y="59" width="5" height="1" fill="rgba(190,185,150,.32)"/><rect x="2321" y="59" width="8" height="1" fill="rgba(60,85,78,.7)"/><rect x="1732" y="68" width="9" height="1" fill="rgba(205,195,160,.3)"/><rect x="2468" y="61" width="3" height="3" fill="rgba(150,160,135,.3)"/><rect x="670" y="63" width="4" height="3" fill="rgba(60,85,78,.7)"/><rect x="367" y="72" width="2" height="2" fill="rgba(60,85,78,.7)"/><rect x="781" y="68" width="5" height="2" fill="rgba(190,185,150,.32)"/><rect x="131" y="61" width="8" height="2" fill="rgba(190,185,150,.32)"/><rect x="2710" y="64" width="2" height="3" fill="rgba(60,85,78,.7)"/><rect x="1387" y="63" width="3" height="1" fill="rgba(150,160,135,.3)"/><rect x="673" y="62" width="8" height="1" fill="rgba(60,85,78,.7)"/><rect x="2307" y="65" width="7" height="1" fill="rgba(60,85,78,.7)"/><rect x="348" y="64" width="7" height="2" fill="rgba(60,85,78,.7)"/><rect x="2190" y="63" width="4" height="3" fill="rgba(70,95,88,.8)"/><rect x="333" y="68" width="2" height="3" fill="rgba(205,195,160,.3)"/><rect x="2495" y="65" width="6" height="3" fill="rgba(60,85,78,.7)"/><rect x="1509" y="66" width="9" height="3" fill="rgba(150,160,135,.3)"/><rect x="1225" y="64" width="7" height="3" fill="rgba(190,185,150,.32)"/><rect x="773" y="66" width="5" height="3" fill="rgba(60,85,78,.7)"/><rect x="2831" y="61" width="3" height="3" fill="rgba(70,95,88,.8)"/><rect x="1523" y="62" width="8" height="3" fill="rgba(150,160,135,.3)"/><rect x="2313" y="63" width="9" height="2" fill="rgba(190,185,150,.32)"/><rect x="930" y="61" width="4" height="3" fill="rgba(190,185,150,.32)"/><rect x="906" y="66" width="6" height="1" fill="rgba(150,160,135,.3)"/><rect x="2174" y="68" width="6" height="2" fill="rgba(150,160,135,.3)"/><rect x="2269" y="61" width="9" height="3" fill="rgba(70,95,88,.8)"/><rect x="2853" y="68" width="3" height="3" fill="rgba(70,95,88,.8)"/><rect x="2321" y="72" width="3" height="2" fill="rgba(190,185,150,.32)"/><rect x="1800" y="72" width="4" height="3" fill="rgba(70,95,88,.8)"/><rect x="2077" y="66" width="3" height="3" fill="rgba(70,95,88,.8)"/><rect x="418" y="72" width="9" height="3" fill="rgba(60,85,78,.7)"/><rect x="2229" y="61" width="4" height="3" fill="rgba(60,85,78,.7)"/><rect x="381" y="62" width="4" height="3" fill="rgba(190,185,150,.32)"/><rect x="1656" y="59" width="5" height="2" fill="rgba(190,185,150,.32)"/><rect x="62" y="63" width="5" height="2" fill="rgba(190,185,150,.32)"/><rect x="2897" y="63" width="4" height="1" fill="rgba(70,95,88,.8)"/><rect x="825" y="68" width="3" height="2" fill="rgba(150,160,135,.3)"/><rect x="1503" y="70" width="7" height="3" fill="rgba(190,185,150,.32)"/><rect x="1047" y="61" width="3" height="2" fill="rgba(70,95,88,.8)"/><rect x="2149" y="68" width="7" height="2" fill="rgba(190,185,150,.32)"/><rect x="2473" y="60" width="7" height="2" fill="rgba(70,95,88,.8)"/><rect x="1340" y="59" width="3" height="3" fill="rgba(150,160,135,.3)"/><rect x="1042" y="61" width="7" height="3" fill="rgba(60,85,78,.7)"/><rect x="87" y="60" width="9" height="1" fill="rgba(60,85,78,.7)"/><rect x="452" y="70" width="3" height="2" fill="rgba(150,160,135,.3)"/><rect x="615" y="72" width="6" height="3" fill="rgba(60,85,78,.7)"/><rect x="590" y="64" width="6" height="3" fill="rgba(205,195,160,.3)"/><rect x="1818" y="59" width="2" height="2" fill="rgba(150,160,135,.3)"/><rect x="1995" y="72" width="9" height="1" fill="rgba(190,185,150,.32)"/><rect x="305" y="65" width="4" height="3" fill="rgba(70,95,88,.8)"/><rect x="1607" y="61" width="9" height="3" fill="rgba(60,85,78,.7)"/><rect x="1611" y="72" width="5" height="3" fill="rgba(70,95,88,.8)"/><rect x="310" y="62" width="7" height="3" fill="rgba(150,160,135,.3)"/><rect x="1274" y="65" width="4" height="3" fill="rgba(190,185,150,.32)"/><rect x="865" y="72" width="4" height="2" fill="rgba(60,85,78,.7)"/><rect x="1357" y="63" width="9" height="2" fill="rgba(205,195,160,.3)"/><rect x="24" y="65" width="7" height="2" fill="rgba(205,195,160,.3)"/><rect x="928" y="61" width="2" height="2" fill="rgba(70,95,88,.8)"/><rect x="185" y="68" width="4" height="3" fill="rgba(150,160,135,.3)"/><rect x="1116" y="62" width="8" height="1" fill="rgba(70,95,88,.8)"/><rect x="1073" y="65" width="7" height="3" fill="rgba(70,95,88,.8)"/><rect x="2393" y="68" width="4" height="1" fill="rgba(70,95,88,.8)"/><rect x="390" y="70" width="5" height="2" fill="rgba(70,95,88,.8)"/><rect x="2599" y="62" width="3" height="2" fill="rgba(150,160,135,.3)"/><rect x="578" y="62" width="3" height="2" fill="rgba(205,195,160,.3)"/><rect x="2084" y="62" width="5" height="3" fill="rgba(60,85,78,.7)"/><rect x="1369" y="68" width="2" height="2" fill="rgba(205,195,160,.3)"/><rect x="1972" y="61" width="7" height="1" fill="rgba(205,195,160,.3)"/><rect x="617" y="61" width="4" height="1" fill="rgba(60,85,78,.7)"/><rect x="1658" y="63" width="9" height="3" fill="rgba(205,195,160,.3)"/><rect x="691" y="61" width="3" height="2" fill="rgba(205,195,160,.3)"/><rect x="1032" y="60" width="7" height="1" fill="rgba(70,95,88,.8)"/><rect x="327" y="62" width="4" height="3" fill="rgba(205,195,160,.3)"/><rect x="1916" y="70" width="7" height="3" fill="rgba(60,85,78,.7)"/><rect x="277" y="62" width="9" height="1" fill="rgba(205,195,160,.3)"/><rect x="1054" y="70" width="2" height="1" fill="rgba(205,195,160,.3)"/><rect x="970" y="61" width="2" height="1" fill="rgba(60,85,78,.7)"/><rect x="1834" y="65" width="5" height="2" fill="rgba(70,95,88,.8)"/><rect x="2654" y="61" width="3" height="1" fill="rgba(190,185,150,.32)"/><rect x="528" y="60" width="2" height="1" fill="rgba(70,95,88,.8)"/><rect x="1397" y="59" width="4" height="1" fill="rgba(205,195,160,.3)"/><rect x="2199" y="66" width="2" height="2" fill="rgba(190,185,150,.32)"/><rect x="869" y="62" width="7" height="3" fill="rgba(190,185,150,.32)"/><rect x="2658" y="63" width="9" height="3" fill="rgba(205,195,160,.3)"/><rect x="714" y="72" width="2" height="2" fill="rgba(190,185,150,.32)"/><rect x="357" y="70" width="7" height="2" fill="rgba(70,95,88,.8)"/><rect x="1636" y="63" width="6" height="1" fill="rgba(190,185,150,.32)"/><rect x="1297" y="59" width="7" height="2" fill="rgba(70,95,88,.8)"/><rect x="2908" y="61" width="7" height="1" fill="rgba(190,185,150,.32)"/><rect x="639" y="61" width="5" height="3" fill="rgba(190,185,150,.32)"/><rect x="1465" y="63" width="7" height="2" fill="rgba(70,95,88,.8)"/><rect x="2785" y="66" width="4" height="3" fill="rgba(70,95,88,.8)"/><rect x="1355" y="68" width="5" height="3" fill="rgba(205,195,160,.3)"/><rect x="2914" y="70" width="9" height="1" fill="rgba(205,195,160,.3)"/><rect x="2669" y="64" width="9" height="2" fill="rgba(205,195,160,.3)"/><rect x="2143" y="61" width="6" height="2" fill="rgba(190,185,150,.32)"/><rect x="2286" y="60" width="9" height="3" fill="rgba(205,195,160,.3)"/><rect x="616" y="63" width="5" height="1" fill="rgba(190,185,150,.32)"/><rect x="2558" y="60" width="4" height="1" fill="rgba(70,95,88,.8)"/><rect x="2055" y="64" width="5" height="1" fill="rgba(205,195,160,.3)"/><rect x="2482" y="68" width="7" height="1" fill="rgba(150,160,135,.3)"/><rect x="663" y="62" width="2" height="3" fill="rgba(150,160,135,.3)"/><rect x="1808" y="61" width="9" height="3" fill="rgba(205,195,160,.3)"/><rect x="1593" y="61" width="9" height="2" fill="rgba(190,185,150,.32)"/><rect x="441" y="60" width="2" height="3" fill="rgba(60,85,78,.7)"/><rect x="2761" y="59" width="7" height="1" fill="rgba(70,95,88,.8)"/><rect x="1540" y="63" width="8" height="3" fill="rgba(150,160,135,.3)"/><rect x="125" y="59" width="6" height="2" fill="rgba(60,85,78,.7)"/><rect x="990" y="62" width="5" height="1" fill="rgba(205,195,160,.3)"/><rect x="1743" y="62" width="6" height="2" fill="rgba(150,160,135,.3)"/><rect x="2332" y="63" width="4" height="2" fill="rgba(150,160,135,.3)"/><rect x="1229" y="60" width="6" height="2" fill="rgba(190,185,150,.32)"/><rect x="1988" y="61" width="5" height="2" fill="rgba(70,95,88,.8)"/><rect x="2447" y="61" width="9" height="3" fill="rgba(190,185,150,.32)"/><rect x="859" y="59" width="7" height="2" fill="rgba(150,160,135,.3)"/><rect x="1780" y="62" width="4" height="3" fill="rgba(190,185,150,.32)"/><rect x="456" y="59" width="4" height="1" fill="rgba(205,195,160,.3)"/><rect x="617" y="60" width="7" height="1" fill="rgba(60,85,78,.7)"/><rect x="2796" y="60" width="8" height="2" fill="rgba(205,195,160,.3)"/><rect x="2630" y="62" width="8" height="1" fill="rgba(70,95,88,.8)"/><rect x="960" y="70" width="5" height="3" fill="rgba(190,185,150,.32)"/><rect x="155" y="64" width="4" height="3" fill="rgba(150,160,135,.3)"/><rect x="2354" y="68" width="8" height="1" fill="rgba(190,185,150,.32)"/><rect x="197" y="60" width="7" height="1" fill="rgba(190,185,150,.32)"/><rect x="1996" y="64" width="4" height="2" fill="rgba(190,185,150,.32)"/><rect x="733" y="66" width="5" height="3" fill="rgba(150,160,135,.3)"/><rect x="2593" y="64" width="3" height="2" fill="rgba(60,85,78,.7)"/><rect x="316" y="61" width="7" height="1" fill="rgba(190,185,150,.32)"/><rect x="1118" y="59" width="4" height="2" fill="rgba(205,195,160,.3)"/><rect x="282" y="61" width="2" height="3" fill="rgba(190,185,150,.32)"/><rect x="1671" y="62" width="7" height="1" fill="rgba(205,195,160,.3)"/><rect x="2818" y="66" width="2" height="2" fill="rgba(70,95,88,.8)"/><rect x="1155" y="68" width="7" height="2" fill="rgba(205,195,160,.3)"/><rect x="1635" y="62" width="8" height="3" fill="rgba(60,85,78,.7)"/><rect x="1568" y="63" width="4" height="2" fill="rgba(60,85,78,.7)"/><rect x="585" y="61" width="2" height="3" fill="rgba(70,95,88,.8)"/><rect x="1043" y="61" width="8" height="1" fill="rgba(190,185,150,.32)"/><rect x="355" y="68" width="2" height="1" fill="rgba(60,85,78,.7)"/><rect x="2843" y="66" width="7" height="3" fill="rgba(60,85,78,.7)"/><rect x="2248" y="63" width="7" height="3" fill="rgba(190,185,150,.32)"/><rect x="1939" y="64" width="9" height="2" fill="rgba(70,95,88,.8)"/><rect x="2237" y="61" width="8" height="3" fill="rgba(60,85,78,.7)"/><rect x="1454" y="63" width="3" height="3" fill="rgba(205,195,160,.3)"/><rect x="2510" y="60" width="7" height="3" fill="rgba(70,95,88,.8)"/><rect x="2720" y="65" width="5" height="2" fill="rgba(205,195,160,.3)"/><rect x="1938" y="64" width="7" height="3" fill="rgba(60,85,78,.7)"/><rect x="2337" y="61" width="5" height="1" fill="rgba(70,95,88,.8)"/><rect x="1491" y="64" width="5" height="1" fill="rgba(205,195,160,.3)"/><rect x="977" y="61" width="4" height="3" fill="rgba(60,85,78,.7)"/><rect x="727" y="62" width="2" height="2" fill="rgba(205,195,160,.3)"/><rect x="1753" y="63" width="3" height="1" fill="rgba(205,195,160,.3)"/><rect x="1536" y="62" width="3" height="2" fill="rgba(70,95,88,.8)"/><rect x="2135" y="63" width="6" height="3" fill="rgba(190,185,150,.32)"/><rect x="1126" y="62" width="8" height="2" fill="rgba(190,185,150,.32)"/><rect x="1840" y="68" width="9" height="1" fill="rgba(70,95,88,.8)"/><rect x="613" y="66" width="2" height="1" fill="rgba(205,195,160,.3)"/><rect x="2002" y="65" width="5" height="2" fill="rgba(70,95,88,.8)"/><rect x="1393" y="62" width="8" height="1" fill="rgba(70,95,88,.8)"/><rect x="822" y="65" width="2" height="2" fill="rgba(190,185,150,.32)"/><rect x="2419" y="62" width="4" height="3" fill="rgba(70,95,88,.8)"/><rect x="1124" y="62" width="7" height="1" fill="rgba(205,195,160,.3)"/><rect x="1794" y="64" width="3" height="3" fill="rgba(60,85,78,.7)"/><rect x="363" y="61" width="5" height="2" fill="rgba(205,195,160,.3)"/><rect x="2530" y="59" width="7" height="3" fill="rgba(60,85,78,.7)"/><rect x="1538" y="59" width="7" height="3" fill="rgba(205,195,160,.3)"/><rect x="1670" y="66" width="8" height="3" fill="rgba(205,195,160,.3)"/><rect x="1443" y="63" width="5" height="3" fill="rgba(150,160,135,.3)"/><rect x="2533" y="72" width="5" height="3" fill="rgba(70,95,88,.8)"/><rect x="1525" y="66" width="3" height="1" fill="rgba(205,195,160,.3)"/><rect x="289" y="70" width="3" height="2" fill="rgba(60,85,78,.7)"/><rect x="1610" y="63" width="8" height="3" fill="rgba(190,185,150,.32)"/><rect x="441" y="63" width="9" height="3" fill="rgba(60,85,78,.7)"/><rect x="1699" y="61" width="9" height="1" fill="rgba(60,85,78,.7)"/><rect x="1628" y="61" width="9" height="3" fill="rgba(190,185,150,.32)"/><rect x="2745" y="68" width="5" height="1" fill="rgba(60,85,78,.7)"/><rect x="2218" y="66" width="2" height="2" fill="rgba(70,95,88,.8)"/><rect x="1352" y="70" width="8" height="2" fill="rgba(190,185,150,.32)"/><rect x="368" y="72" width="5" height="1" fill="rgba(70,95,88,.8)"/><rect x="63" y="63" width="3" height="1" fill="rgba(150,160,135,.3)"/><rect x="2311" y="59" width="9" height="3" fill="rgba(150,160,135,.3)"/><rect x="2912" y="63" width="7" height="1" fill="rgba(70,95,88,.8)"/><rect x="2830" y="72" width="8" height="3" fill="rgba(150,160,135,.3)"/><rect x="1666" y="72" width="2" height="3" fill="rgba(150,160,135,.3)"/><rect x="1312" y="61" width="7" height="3" fill="rgba(190,185,150,.32)"/><rect x="762" y="64" width="6" height="2" fill="rgba(190,185,150,.32)"/><rect x="1282" y="62" width="8" height="3" fill="rgba(205,195,160,.3)"/><rect x="2276" y="64" width="8" height="2" fill="rgba(190,185,150,.32)"/><rect x="1256" y="61" width="6" height="2" fill="rgba(60,85,78,.7)"/><rect x="2210" y="62" width="6" height="1" fill="rgba(150,160,135,.3)"/><rect x="213" y="64" width="5" height="3" fill="rgba(205,195,160,.3)"/><rect x="1901" y="68" width="9" height="3" fill="rgba(150,160,135,.3)"/><rect x="1498" y="61" width="7" height="2" fill="rgba(70,95,88,.8)"/><rect x="2719" y="68" width="2" height="2" fill="rgba(190,185,150,.32)"/><rect x="2183" y="63" width="3" height="3" fill="rgba(205,195,160,.3)"/><rect x="144" y="61" width="6" height="2" fill="rgba(205,195,160,.3)"/><rect x="821" y="70" width="5" height="3" fill="rgba(70,95,88,.8)"/><rect x="1862" y="68" width="8" height="2" fill="rgba(150,160,135,.3)"/><rect x="832" y="61" width="2" height="2" fill="rgba(190,185,150,.32)"/><rect x="200" y="72" width="4" height="1" fill="rgba(70,95,88,.8)"/><rect x="2036" y="59" width="4" height="3" fill="rgba(70,95,88,.8)"/><rect x="672" y="61" width="9" height="3" fill="rgba(205,195,160,.3)"/><rect x="864" y="61" width="4" height="3" fill="rgba(150,160,135,.3)"/><rect x="2114" y="63" width="3" height="1" fill="rgba(150,160,135,.3)"/><rect x="374" y="63" width="2" height="1" fill="rgba(205,195,160,.3)"/><rect x="2892" y="66" width="9" height="2" fill="rgba(150,160,135,.3)"/><rect x="232" y="59" width="4" height="1" fill="rgba(60,85,78,.7)"/><rect x="1202" y="72" width="5" height="3" fill="rgba(205,195,160,.3)"/><rect x="2895" y="62" width="4" height="2" fill="rgba(205,195,160,.3)"/><rect x="2247" y="61" width="5" height="3" fill="rgba(150,160,135,.3)"/><rect x="1603" y="62" width="2" height="2" fill="rgba(150,160,135,.3)"/><rect x="2624" y="61" width="6" height="3" fill="rgba(70,95,88,.8)"/><rect x="2843" y="61" width="3" height="2" fill="rgba(150,160,135,.3)"/><rect x="753" y="62" width="8" height="3" fill="rgba(60,85,78,.7)"/><rect x="468" y="72" width="2" height="2" fill="rgba(190,185,150,.32)"/><rect x="2693" y="66" width="5" height="3" fill="rgba(70,95,88,.8)"/><rect x="298" y="63" width="6" height="2" fill="rgba(190,185,150,.32)"/><rect x="2033" y="61" width="3" height="2" fill="rgba(205,195,160,.3)"/><rect x="1240" y="61" width="3" height="1" fill="rgba(60,85,78,.7)"/><rect x="1110" y="65" width="5" height="2" fill="rgba(190,185,150,.32)"/><rect x="2376" y="59" width="3" height="2" fill="rgba(150,160,135,.3)"/><rect x="623" y="59" width="6" height="1" fill="rgba(205,195,160,.3)"/><rect x="1434" y="63" width="9" height="1" fill="rgba(205,195,160,.3)"/><rect x="1491" y="60" width="4" height="2" fill="rgba(190,185,150,.32)"/><rect x="2290" y="60" width="9" height="3" fill="rgba(70,95,88,.8)"/><rect x="462" y="65" width="4" height="2" fill="rgba(60,85,78,.7)"/><rect x="147" y="59" width="2" height="3" fill="rgba(70,95,88,.8)"/><rect x="398" y="66" width="8" height="3" fill="rgba(150,160,135,.3)"/><rect x="1701" y="60" width="7" height="2" fill="rgba(150,160,135,.3)"/><rect x="1472" y="66" width="4" height="1" fill="rgba(205,195,160,.3)"/><rect x="20" y="62" width="9" height="1" fill="rgba(205,195,160,.3)"/></svg>
<div class="" style="left:0.0px;top:60.0px;width:2932.0px;height:17.0px;background:linear-gradient(to right,rgba(196,190,160,.13) 0,rgba(196,190,160,.11) 33%,rgba(196,190,160,.02) 40%,rgba(40,70,66,.16) 50%,rgba(40,70,66,.10) 62%,rgba(196,190,160,.07) 70%,rgba(196,190,160,.11) 100%)"></div>
</section>
<section id="app-window">
<div class="" style="left:-15.5px;top:76.3px;width:2951.0px;height:1853.0px;background:#EFE6DE;border-radius:29px;border:1.500px solid #14110d;box-shadow:inset 0 1px 0 rgba(255,255,255,.85)"></div>
</section>
<header id="menubar">
<svg class="ic" style="left:33.500px;top:27.500px;width:25.500px;height:31px" viewBox="0 0 814 1000" fill="#000"><path d="M788 341c-6 4-108 62-108 190 0 148 130 201 134 202-1 3-21 72-69 143-43 62-88 124-157 124s-87-40-166-40c-77 0-105 41-168 41s-107-57-157-128C38 789 0 661 0 540c0-195 127-298 251-298 66 0 122 44 163 44 40 0 102-46 177-46 29 0 132 3 197 101zM554 159c31-37 53-89 53-140 0-7-1-14-2-20-51 2-111 34-147 76-29 33-55 84-55 136 0 8 1 16 2 18 3 1 8 1 13 1 46 0 103-30 136-71z"/></svg>
<svg class="ic" style="left:1905.9px;top:26.7px;width:36px;height:36px" viewBox="0 0 24 24" fill="none" stroke="#111" stroke-width="2" stroke-linecap="round" stroke-linejoin="round"><path d="M12 1.500 21.500 7v10.500L12 22.500 2.500 17.500V7z" fill="#111" stroke="#111" stroke-width="1"/><path d="M12 12.400V22M12 12.400 21 7.300" stroke="#DCCBA5" stroke-width="1.300"/><path d="M12.700 12.800 20.800 8.200v8.800l-8.100 4.300z" fill="#111" stroke="none"/><path d="M12 12.400 3 7.300" stroke="#111" stroke-width="1"/></svg>
<svg class="ic" style="left:1972.2px;top:26.7px;width:36px;height:36px" viewBox="0 0 24 24" fill="none" stroke="#111" stroke-width="2" stroke-linecap="round" stroke-linejoin="round"><path d="M12.800 2.500v9" stroke-width="3"/><path d="M12 12c-3 1-5.500 3-7 6l-2.500 1.500 3 .5-.5 2 2.500-1.500.5 2 2-2 1.500 2 1.500-2 2 2 .5-2 2.500 1.500-.5-2 3-.5L18.500 18c-1.500-3-3.500-5-6.500-6z" fill="#111" stroke="none"/></svg>
<svg class="ic" style="left:2038.0px;top:26.7px;width:36px;height:36px" viewBox="0 0 24 24" fill="none" stroke="#111" stroke-width="2" stroke-linecap="round" stroke-linejoin="round"><rect x="2.500" y="2.500" width="19" height="19" rx="5"/><path d="M14.500 7.500a1.600 1.600 0 0 1 2.300 2.300L10.500 16l-3 .8.8-3z" stroke-width="1.600"/></svg>
<svg class="ic" style="left:2105.5px;top:24.7px;width:40px;height:40px" viewBox="0 0 24 24" fill="none" stroke="#111" stroke-width="2" stroke-linecap="round" stroke-linejoin="round"><path d="M3 9.500h3.500L12 5v14l-5.500-4.500H3z" fill="#111"/><path d="M15.500 9a4 4 0 0 1 0 6" stroke-width="1.800"/><path d="M18.300 6.500a8 8 0 0 1 0 11" stroke="#7d735c" stroke-width="1.800"/><path d="M21 4.500a11 11 0 0 1 0 15" stroke="#a99d80" stroke-width="1.800"/></svg>
<svg class="ic" style="left:2180.4px;top:26.7px;width:36px;height:36px" viewBox="0 0 24 24" fill="none" stroke="#111" stroke-width="2" stroke-linecap="round" stroke-linejoin="round"><path d="M3.500 7.200 18.500 5.500a2 2 0 0 1 2.200 2V18a2 2 0 0 1-2 2h-5.200z" stroke-width="2.300"/><path d="M4.200 7.500l9.300 12.300" stroke-width="4.200"/></svg>
<div class="" style="left:2240.4px;top:20.8px;width:79.4px;height:47.7px;background:#5151E0;border-radius:24px"></div>
<svg class="ic" style="left:2260px;top:27px;width:40px;height:36px" viewBox="0 0 40 36" fill="none" stroke="#fff" stroke-width="2.600"><rect x="3" y="4" width="24" height="18" rx="4"/><rect x="11" y="12" width="26" height="19" rx="4" fill="#5151E0"/></svg>
<svg class="ic" style="left:2342px;top:29px;width:56px;height:32px" viewBox="0 0 56 32" fill="none"><rect x="2" y="4" width="46" height="24" rx="7" stroke="#7d735c" stroke-width="2.200"/><rect x="5.500" y="7.500" width="33" height="17" rx="4" fill="#111"/><path d="M51 12.500v7" stroke="#7d735c" stroke-width="3" stroke-linecap="round"/><path d="M29 3 18 17.500h7L21 29l12-15h-7z" fill="#111" stroke="#DCCBA5" stroke-width="1.800"/></svg>
<svg class="ic" style="left:2432.5px;top:28.2px;width:35px;height:35px" viewBox="0 0 24 24" fill="none" stroke="#111" stroke-width="2" stroke-linecap="round" stroke-linejoin="round"><path d="M1.500 9a15 15 0 0 1 21 0" stroke-width="2.800"/><path d="M5 12.800a10 10 0 0 1 14 0" stroke-width="2.800"/><path d="M8.500 16.500a5 5 0 0 1 7 0" stroke-width="2.800"/><circle cx="12" cy="19.800" r="1.800" fill="#111" stroke="none"/></svg>
<svg class="ic" style="left:2503.5px;top:30.2px;width:31px;height:31px" viewBox="0 0 24 24" fill="none" stroke="#111" stroke-width="2" stroke-linecap="round" stroke-linejoin="round"><circle cx="10" cy="10" r="6.500" stroke-width="2.400"/><path d="m15 15 6 6" stroke-width="2.600"/></svg>
<svg class="ic" style="left:2576.5px;top:28.7px;width:32px;height:32px" viewBox="0 0 24 24" fill="none" stroke="#111" stroke-width="2" stroke-linecap="round" stroke-linejoin="round"><rect x="2.500" y="3.500" width="19" height="7.500" rx="3.750" stroke-width="2"/><circle cx="7" cy="7.250" r="2.300" fill="#111" stroke="none"/><rect x="2.500" y="13.500" width="19" height="7.500" rx="3.750" fill="#111" stroke-width="2"/><circle cx="17" cy="17.250" r="2.200" fill="#DCCBA5" stroke="none"/></svg>
<span class="t s" style="left:99.8px;top:31.3px;font-size:27px;color:#000;font-weight:700;letter-spacing:-0.06px;">Obsidian</span>
<span class="t s" style="left:255.1px;top:31.3px;font-size:27px;color:#000;letter-spacing:-0.33px;">File</span>
<span class="t s" style="left:339.2px;top:31.3px;font-size:27px;color:#000;letter-spacing:-0.31px;">Edit</span>
<span class="t s" style="left:426.6px;top:31.3px;font-size:27px;color:#000;letter-spacing:0.24px;">Insert</span>
<span class="t s" style="left:537.0px;top:31.3px;font-size:27px;color:#000;letter-spacing:0.02px;">Format</span>
<span class="t s" style="left:665.1px;top:31.3px;font-size:27px;color:#000;letter-spacing:-0.75px;">View</span>
<span class="t s" style="left:765.5px;top:31.3px;font-size:27px;color:#000;letter-spacing:-0.57px;">Window</span>
<span class="t s" style="left:901.4px;top:31.3px;font-size:27px;color:#000;letter-spacing:0.26px;">Help</span>
<span class="t s" style="left:2653.3px;top:31.7px;font-size:27px;color:#000;letter-spacing:-0.49px;">Tue Jan 20</span>
<span class="t s" style="left:2799.0px;top:31.7px;font-size:27px;color:#000;letter-spacing:0.11px;">8:34 AM</span>
</header>
<nav id="titlebar-left">
<div class="" style="left:28.0px;top:112.0px;width:24.0px;height:24.0px;background:#FF5F57;border-radius:50%;border:1px solid #E0443E"></div>
<div class="" style="left:68.0px;top:112.0px;width:24.0px;height:24.0px;background:#FEBC2E;border-radius:50%;border:1px solid #DEA123"></div>
<div class="" style="left:108.0px;top:112.0px;width:24.0px;height:24.0px;background:#28C840;border-radius:50%;border:1px solid #1AAB29"></div>
<div class="tab" style="left:168.0px;top:92.4px;width:65.6px;height:60.6px;border-radius:8px"></div>
<svg class="ic" style="left:183.0px;top:103.5px;width:36px;height:36px;color:#D7952F" viewBox="0 0 24 24" fill="none" stroke="currentColor" stroke-width="1.75" stroke-linecap="round" stroke-linejoin="round"><path d="M3 10.2a2 2 0 0 1 .7-1.5l7-6a2 2 0 0 1 2.6 0l7 6a2 2 0 0 1 .7 1.5V19a2 2 0 0 1-2 2H5a2 2 0 0 1-2-2z"/><path d="M9.2 21v-5.2a2.8 2.8 0 0 1 5.6 0V21"/></svg>
<svg class="ic" style="left:256.9px;top:105.5px;width:35px;height:35px;color:#B9A38A" viewBox="0 0 24 24" fill="none" stroke="currentColor" stroke-width="1.8" stroke-linecap="round" stroke-linejoin="round"><path d="M20 10V5a2 2 0 0 0-2-2H6a2 2 0 0 0-2 2v14a2 2 0 0 0 2 2h6"/><path d="M8.5 8h7"/><circle cx="17" cy="17" r="3"/><path d="m22 22-2.8-2.8"/></svg>
<svg class="ic" style="left:327.0px;top:105.5px;width:35px;height:35px;color:#B9A38A" viewBox="0 0 24 24" fill="none" stroke="currentColor" stroke-width="1.8" stroke-linecap="round" stroke-linejoin="round"><path d="M4 19V6a4 4 0 0 1 4-4h8a4 4 0 0 1 4 4v13a3 3 0 0 1-3 3H7a3 3 0 0 1 0-6h13"/><path d="M10.500 2.500v7l2-1.600 2 1.600v-7z" fill="currentColor" stroke-width="1"/></svg>
<svg class="ic" style="left:459.0px;top:106.0px;width:36px;height:36px;color:#B9A38A" viewBox="0 0 24 24" fill="none" stroke="currentColor" stroke-width="1.8" stroke-linecap="round" stroke-linejoin="round"><rect x="2" y="4" width="20" height="16" rx="3.800"/><rect x="5.600" y="7.300" width="4" height="9.400" rx="1.500" fill="currentColor" stroke="none"/></svg>
</nav>
<nav id="ribbon">
<div class="" style="left:-30.0px;top:170.5px;width:109.0px;height:1732.0px;border:1.600px solid #E5D8CA;border-radius:28px;background:transparent"></div>
<svg class="ic" style="left:18.0px;top:193.4px;width:34px;height:34px;color:#C6B39C" viewBox="0 0 24 24" fill="none" stroke="currentColor" stroke-width="1.75" stroke-linecap="round" stroke-linejoin="round"><rect x="3" y="3" width="7" height="7" rx="1"/><rect x="3" y="14" width="7" height="7" rx="1"/><path d="M14 4h7"/><path d="M14 9h7"/><path d="M14 15h7"/><path d="M14 20h7"/></svg>
<svg class="ic" style="left:18.0px;top:251.5px;width:34px;height:34px;color:#C6B39C" viewBox="0 0 24 24" fill="none" stroke="currentColor" stroke-width="1.75" stroke-linecap="round" stroke-linejoin="round"><path d="M20 10V5a2 2 0 0 0-2-2H6a2 2 0 0 0-2 2v14a2 2 0 0 0 2 2h6"/><path d="M8.5 8h7"/><circle cx="17" cy="17" r="3"/><path d="m22 22-2.8-2.8"/></svg>
<svg class="ic" style="left:18.0px;top:309.6px;width:34px;height:34px;color:#C6B39C" viewBox="0 0 24 24" fill="none" stroke="currentColor" stroke-width="1.75" stroke-linecap="round" stroke-linejoin="round"><circle cx="8.500" cy="4.500" r="2.300"/><circle cx="12" cy="11.500" r="3.200"/><circle cx="19.500" cy="14.500" r="2.500"/><circle cx="4.500" cy="19" r="2.500"/><path d="m9.500 6.600 1.200 2"/><path d="m15 12.800 2.200.9"/><path d="m9.600 13.800-3.300 3.400"/></svg>
<svg class="ic" style="left:18.0px;top:367.7px;width:34px;height:34px;color:#C6B39C" viewBox="0 0 24 24" fill="none" stroke="currentColor" stroke-width="1.75" stroke-linecap="round" stroke-linejoin="round"><rect x="2.500" y="2.500" width="19" height="19" rx="4"/><circle cx="8.200" cy="8.200" r="1.600" fill="currentColor"/><rect x="14.200" y="6.600" width="3.200" height="3.200" rx=".6" fill="currentColor"/><path d="m8.200 13.800 2 2-2 2-2-2z" fill="currentColor" stroke-width="1"/><path d="m15.800 13.800-2.200 3.800h4.400z" fill="currentColor" stroke-width="1"/></svg>
<svg class="ic" style="left:18.0px;top:425.8px;width:34px;height:34px;color:#C6B39C" viewBox="0 0 24 24" fill="none" stroke="currentColor" stroke-width="1.75" stroke-linecap="round" stroke-linejoin="round"><path d="M8.96 6.73A3.05 3.05 0 0 1 15.04 6.73A3.05 3.05 0 0 1 18.08 12.00A3.05 3.05 0 0 1 15.04 17.27A3.05 3.05 0 0 1 8.96 17.27A3.05 3.05 0 0 1 5.92 12.00A3.05 3.05 0 0 1 8.96 6.73z"/></svg>
<svg class="ic" style="left:18.0px;top:483.9px;width:34px;height:34px;color:#C6B39C" viewBox="0 0 24 24" fill="none" stroke="currentColor" stroke-width="1.75" stroke-linecap="round" stroke-linejoin="round"><circle cx="10.500" cy="10.500" r="7.500"/><path d="m21.500 21.500-5.600-5.600"/></svg>
<svg class="ic" style="left:18.0px;top:542.0px;width:34px;height:34px;color:#C6B39C" viewBox="0 0 24 24" fill="none" stroke="currentColor" stroke-width="1.75" stroke-linecap="round" stroke-linejoin="round"><rect x="3" y="4" width="18" height="16" rx="2.500"/><rect x="7" y="8" width="3" height="7" rx=".5"/><rect x="13" y="8" width="3" height="4" rx=".5"/></svg>
<svg class="ic" style="left:18.0px;top:600.1px;width:34px;height:34px;color:#C6B39C" viewBox="0 0 24 24" fill="none" stroke="currentColor" stroke-width="1.75" stroke-linecap="round" stroke-linejoin="round"><path d="M21 12a9 9 0 1 1-9-9c2.520 0 4.930 1 6.740 2.740L21 8"/><path d="M21 3v5h-5"/></svg>
<svg class="ic" style="left:18.0px;top:658.2px;width:34px;height:34px;color:#C6B39C" viewBox="0 0 24 24" fill="none" stroke="currentColor" stroke-width="1.75" stroke-linecap="round" stroke-linejoin="round"><rect x="3" y="3.500" width="18" height="17" rx="2.500"/><path d="m7.300 8.300 2.400 2.400-2.400 2.400"/><path d="M12 14.800h4"/></svg>
</nav>
<aside id="file-explorer">
<svg class="ic" style="left:117.5px;top:187.5px;width:35px;height:35px;color:#B39D85" viewBox="0 0 24 24" fill="none" stroke="currentColor" stroke-width="1.8" stroke-linecap="round" stroke-linejoin="round"><path d="M12 3H6a3 3 0 0 0-3 3v12a3 3 0 0 0 3 3h9l6-6v-3"/><path d="M15 21v-3a3 3 0 0 1 3-3h3"/><path d="M18.400 2.600a2.100 2.100 0 0 1 3 3L11 16l-4 1 1-4z"/></svg>
<svg class="ic" style="left:179.5px;top:187.5px;width:35px;height:35px;color:#B39D85" viewBox="0 0 24 24" fill="none" stroke="currentColor" stroke-width="1.8" stroke-linecap="round" stroke-linejoin="round"><path d="M4 20h16a2 2 0 0 0 2-2V8a2 2 0 0 0-2-2h-7.900a2 2 0 0 1-1.700-.9l-.8-1.200A2 2 0 0 0 7.900 3H4a2 2 0 0 0-2 2v13a2 2 0 0 0 2 2z"/><path d="M2 9h20"/><path d="M12 12v5"/><path d="M9.500 14.500h5"/></svg>
<svg class="ic" style="left:241.5px;top:187.5px;width:35px;height:35px;color:#B39D85" viewBox="0 0 24 24" fill="none" stroke="currentColor" stroke-width="1.8" stroke-linecap="round" stroke-linejoin="round"><path d="m2.800 6.800 3.200-3.800 3.200 3.800"/><path d="M6 3v18"/><path d="M11 8.500h3"/><path d="M11 12.500h5.500"/><path d="M11 16.500h8"/><path d="M11 20.500h10.500"/></svg>
<svg class="ic" style="left:303.5px;top:187.5px;width:35px;height:35px;color:#B39D85" viewBox="0 0 24 24" fill="none" stroke="currentColor" stroke-width="1.8" stroke-linecap="round" stroke-linejoin="round"><path d="M4.200 3.500h15.600"/><rect x="4.200" y="7" width="15.600" height="10.500" rx="1.800"/><path d="M4.200 21h15.600"/></svg>
<svg class="ic" style="left:365.5px;top:187.5px;width:35px;height:35px;color:#B39D85" viewBox="0 0 24 24" fill="none" stroke="currentColor" stroke-width="1.8" stroke-linecap="round" stroke-linejoin="round"><path d="M12 22v-6"/><path d="M12 8V2"/><path d="M3 12h.01M6.600 12h.01M10.200 12h.01M13.800 12h.01M17.400 12h.01M21 12h.01"/><path d="m15 19-3-3-3 3"/><path d="m15 5-3 3-3-3"/></svg>
<div class="" style="left:105.0px;top:689.3px;width:390.4px;height:52.0px;background:#F3ECE5;border:2px solid #D9CEC4;border-radius:12px;box-shadow:inset 0 -7px 0 #DDD3CB, 0 3px 5px rgba(120,90,50,.15)"></div>
<svg class="ic" style="left:114.0px;top:296.5px;width:28px;height:28px;color:#C4AE95" viewBox="0 0 24 24" fill="none" stroke="currentColor" stroke-width="2.3" stroke-linecap="round" stroke-linejoin="round"><path d="m8.500 5 7 7-7 7"/></svg>
<svg class="ic" style="left:114.0px;top:354.2px;width:28px;height:28px;color:#C4AE95" viewBox="0 0 24 24" fill="none" stroke="currentColor" stroke-width="2.3" stroke-linecap="round" stroke-linejoin="round"><path d="m8.500 5 7 7-7 7"/></svg>
<svg class="ic" style="left:114.0px;top:411.9px;width:28px;height:28px;color:#C4AE95" viewBox="0 0 24 24" fill="none" stroke="currentColor" stroke-width="2.3" stroke-linecap="round" stroke-linejoin="round"><path d="m8.500 5 7 7-7 7"/></svg>
<svg class="ic" style="left:114.0px;top:469.6px;width:28px;height:28px;color:#C4AE95" viewBox="0 0 24 24" fill="none" stroke="currentColor" stroke-width="2.3" stroke-linecap="round" stroke-linejoin="round"><path d="m8.500 5 7 7-7 7"/></svg>
<svg class="ic" style="left:114.0px;top:527.3px;width:28px;height:28px;color:#C4AE95" viewBox="0 0 24 24" fill="none" stroke="currentColor" stroke-width="2.3" stroke-linecap="round" stroke-linejoin="round"><path d="m8.500 5 7 7-7 7"/></svg>
<svg class="ic" style="left:114.0px;top:585.0px;width:28px;height:28px;color:#C4AE95" viewBox="0 0 24 24" fill="none" stroke="currentColor" stroke-width="2.3" stroke-linecap="round" stroke-linejoin="round"><path d="m8.500 5 7 7-7 7"/></svg>
<svg class="ic" style="left:114.0px;top:642.7px;width:28px;height:28px;color:#C4AE95" viewBox="0 0 24 24" fill="none" stroke="currentColor" stroke-width="2.3" stroke-linecap="round" stroke-linejoin="round"><path d="m8.500 5 7 7-7 7"/></svg>
<span class="t" style="left:177.7px;top:245.2px;font-size:24px;color:#8E7B63;letter-spacing:0.07px;">14,010,500 words</span>
<span class="t" style="left:151.9px;top:298.9px;font-size:26.5px;color:#6B5233;letter-spacing:-1.70px;transform:scaleX(0.8622);">ancillary</span>
<span class="t" style="left:322.0px;top:302.7px;font-size:22px;color:#8E7B63;letter-spacing:-0.75px;">59,567 words</span>
<span class="t" style="left:151.8px;top:356.6px;font-size:26.5px;color:#6B5233;letter-spacing:-1.70px;transform:scaleX(0.9575);">inbox</span>
<span class="t" style="left:322.0px;top:360.4px;font-size:22px;color:#8E7B63;letter-spacing:-0.75px;">11,829 words</span>
<span class="t" style="left:151.9px;top:414.3px;font-size:26.5px;color:#6B5233;letter-spacing:-1.70px;transform:scaleX(0.8726);">inform...</span>
<span class="t" style="left:271.4px;top:418.1px;font-size:22px;color:#8E7B63;letter-spacing:-0.70px;">13,082,185 words</span>
<span class="t" style="left:150.9px;top:472.1px;font-size:26.5px;color:#6B5233;letter-spacing:-1.70px;transform:scaleX(0.9359);">narrative</span>
<span class="t" style="left:322.0px;top:475.8px;font-size:22px;color:#8E7B63;letter-spacing:-0.75px;">43,733 words</span>
<span class="t" style="left:150.9px;top:529.8px;font-size:26.5px;color:#6B5233;letter-spacing:-1.70px;transform:scaleX(0.9340);">nonfiction</span>
<span class="t" style="left:309.3px;top:533.5px;font-size:22px;color:#8E7B63;letter-spacing:-0.73px;">759,441 words</span>
<span class="t" style="left:150.8px;top:587.5px;font-size:26.5px;color:#6B5233;letter-spacing:-1.70px;transform:scaleX(0.9909);">personal</span>
<span class="t" style="left:322.0px;top:591.2px;font-size:22px;color:#8E7B63;letter-spacing:-0.75px;">45,494 words</span>
<span class="t" style="left:150.9px;top:645.2px;font-size:26.5px;color:#6B5233;letter-spacing:-1.70px;transform:scaleX(0.9573);">professional</span>
<span class="t" style="left:334.3px;top:648.9px;font-size:22px;color:#8E7B63;letter-spacing:-0.73px;">6,821 words</span>
<span class="t" style="left:152.8px;top:700.7px;font-size:26.5px;color:#6B5233;letter-spacing:-0.76px;">AGENDA</span>
<span class="t" style="left:359.4px;top:704.4px;font-size:22px;color:#8E7B63;letter-spacing:-0.75px;">246 words</span>
<span class="t" style="left:151.8px;top:760.6px;font-size:26.5px;color:#6B5233;letter-spacing:-0.36px;">CLAUDE</span>
<span class="t" style="left:359.4px;top:764.3px;font-size:22px;color:#8E7B63;letter-spacing:-0.75px;">203 words</span>
<span class="t" style="left:150.9px;top:818.3px;font-size:26.5px;color:#6B5233;letter-spacing:-1.70px;transform:scaleX(0.9433);">publish</span>
<span class="t" style="left:420.5px;top:822.0px;font-size:22px;color:#8E7B63;letter-spacing:-1.30px;transform:scaleX(0.9625);">css</span>
<span class="t" style="left:150.8px;top:876.0px;font-size:26.5px;color:#6B5233;letter-spacing:1.36px;">README</span>
<span class="t" style="left:359.4px;top:879.7px;font-size:22px;color:#8E7B63;letter-spacing:-0.75px;">981 words</span>
</aside>
<footer id="vault-switcher">
<div class="" style="left:96.6px;top:1834.5px;width:406.4px;height:68.0px;background:#F3ECE3;border:1.600px solid #E4D9C9;border-radius:16px"></div>
<svg class="ic" style="left:397.0px;top:1853.3px;width:32px;height:32px;color:#B9A38A" viewBox="0 0 24 24" fill="none" stroke="currentColor" stroke-width="1.8" stroke-linecap="round" stroke-linejoin="round"><circle cx="12" cy="12" r="10"/><path d="M9.100 9a3 3 0 0 1 5.800 1c0 2-3 3-3 3"/><path d="M12 17h.01"/></svg>
<svg class="ic" style="left:450.8px;top:1853.3px;width:32px;height:32px;color:#B9A38A" viewBox="0 0 24 24" fill="none" stroke="currentColor" stroke-width="1.8" stroke-linecap="round" stroke-linejoin="round"><path d="M12.200 2h-.4a2 2 0 0 0-2 2v.2a2 2 0 0 1-1 1.700l-.4.300a2 2 0 0 1-2 0l-.2-.1a2 2 0 0 0-2.700.7l-.2.400a2 2 0 0 0 .7 2.700l.2.100a2 2 0 0 1 1 1.700v.500a2 2 0 0 1-1 1.800l-.2.100a2 2 0 0 0-.7 2.700l.2.400a2 2 0 0 0 2.700.7l.2-.1a2 2 0 0 1 2 0l.4.300a2 2 0 0 1 1 1.700v.200a2 2 0 0 0 2 2h.4a2 2 0 0 0 2-2v-.2a2 2 0 0 1 1-1.700l.4-.300a2 2 0 0 1 2 0l.2.100a2 2 0 0 0 2.700-.7l.2-.4a2 2 0 0 0-.7-2.700l-.2-.1a2 2 0 0 1-1-1.800v-.5a2 2 0 0 1 1-1.700l.2-.1a2 2 0 0 0 .7-2.700l-.2-.4a2 2 0 0 0-2.700-.7l-.2.100a2 2 0 0 1-2 0l-.4-.300a2 2 0 0 1-1-1.700V4a2 2 0 0 0-2-2z"/><circle cx="12" cy="12" r="3"/></svg>
<span class="t s" style="left:122.7px;top:1855.1px;font-size:28px;color:#7B6549;letter-spacing:0.77px;">slipbox</span>
</footer>
<nav id="tabs-top">
<div class="tab" style="left:553.4px;top:92.0px;width:312.6px;height:66.0px;"></div>
<svg class="ic" style="left:827.7px;top:113.0px;width:22px;height:22px;color:#D7952F" viewBox="0 0 24 24" fill="none" stroke="currentColor" stroke-width="2.2" stroke-linecap="round" stroke-linejoin="round"><path d="m6 6 12 12"/><path d="M18 6 6 18"/></svg>
<div class="" style="left:1171.0px;top:106.0px;width:2.0px;height:40.0px;background:#D9C9B6"></div>
<svg class="ic" style="left:1187.4px;top:115.0px;width:26px;height:26px;color:#B09A82" viewBox="0 0 24 24" fill="none" stroke="currentColor" stroke-width="1.7" stroke-linecap="round" stroke-linejoin="round"><path d="M12 5v14"/><path d="M5 12h14"/></svg>
<svg class="ic" style="left:1241.0px;top:114.0px;width:28px;height:28px;color:#B09A82" viewBox="0 0 24 24" fill="none" stroke="currentColor" stroke-width="1.8" stroke-linecap="round" stroke-linejoin="round"><path d="m5 8.500 7 7 7-7"/></svg>
<div class="tab" style="left:1358.4px;top:92.0px;width:398.7px;height:66.0px;"></div>
<svg class="ic" style="left:1720.0px;top:113.0px;width:22px;height:22px;color:#D7952F" viewBox="0 0 24 24" fill="none" stroke="currentColor" stroke-width="2.2" stroke-linecap="round" stroke-linejoin="round"><path d="m6 6 12 12"/><path d="M18 6 6 18"/></svg>
<svg class="ic" style="left:1771.7px;top:115.0px;width:26px;height:26px;color:#B09A82" viewBox="0 0 24 24" fill="none" stroke="currentColor" stroke-width="1.7" stroke-linecap="round" stroke-linejoin="round"><path d="M12 5v14"/><path d="M5 12h14"/></svg>
<svg class="ic" style="left:2046.3px;top:114.0px;width:28px;height:28px;color:#B09A82" viewBox="0 0 24 24" fill="none" stroke="currentColor" stroke-width="1.8" stroke-linecap="round" stroke-linejoin="round"><path d="m5 8.500 7 7 7-7"/></svg>
<span class="t" style="left:574.0px;top:114.6px;font-size:26px;color:#D7952F;letter-spacing:-0.32px;">AGENDA</span>
<span class="t" style="left:882.6px;top:114.6px;font-size:26px;color:#B5A089;letter-spacing:-1.30px;transform:scaleX(0.9860);">ARCHIVE</span>
<span class="t" style="left:1376.9px;top:114.6px;font-size:26px;color:#D7952F;letter-spacing:-1.30px;transform:scaleX(0.9378);">Prayers in Salt</span>
</nav>
<article id="pane-agenda">
<div class="pane" style="left:520.5px;top:169.5px;width:790.0px;height:871.5px;"></div>
<div class="hdrline" style="left:522.5px;top:239.7px;width:786.0px;height:2.0px;"></div>
<svg class="ic" style="left:561.5px;top:193.1px;width:25px;height:25px;color:#E1D8CD" viewBox="0 0 24 24" fill="none" stroke="currentColor" stroke-width="1.8" stroke-linecap="round" stroke-linejoin="round"><path d="M19 12H5"/><path d="m11 6-6 6 6 6"/></svg>
<svg class="ic" style="left:613.3px;top:193.1px;width:25px;height:25px;color:#E1D8CD" viewBox="0 0 24 24" fill="none" stroke="currentColor" stroke-width="1.8" stroke-linecap="round" stroke-linejoin="round"><path d="M5 12h14"/><path d="m13 6 6 6-6 6"/></svg>
<svg class="ic" style="left:1186.5px;top:188.5px;width:35px;height:35px;color:#B09A82" viewBox="0 0 24 24" fill="none" stroke="currentColor" stroke-width="1.75" stroke-linecap="round" stroke-linejoin="round"><circle cx="6.500" cy="16" r="4"/><circle cx="17.500" cy="16" r="4"/><path d="M10.500 16a1.500 1.500 0 0 1 3 0"/><path d="M2.500 16V6.500A3.500 3.500 0 0 1 6 3h.5"/><path d="M21.500 16V6.500A3.500 3.500 0 0 0 18 3h-.5"/></svg>
<svg class="ic" style="left:1239.0px;top:186.6px;width:38px;height:38px;color:#B09A82" viewBox="0 0 24 24" fill="none" stroke="currentColor" stroke-width="2" stroke-linecap="round" stroke-linejoin="round"><circle cx="4" cy="12" r="1.500" fill="currentColor" stroke="none"/><circle cx="12" cy="12" r="1.500" fill="currentColor" stroke="none"/><circle cx="20" cy="12" r="1.500" fill="currentColor" stroke="none"/></svg>
<div class="" style="left:609.7px;top:364.8px;width:10.6px;height:10.6px;background:#B8A188;border-radius:50%"></div>
<div class="" style="left:609.7px;top:417.8px;width:10.6px;height:10.6px;background:#B8A188;border-radius:50%"></div>
<div class="" style="left:609.7px;top:519.4px;width:10.6px;height:10.6px;background:#B8A188;border-radius:50%"></div>
<div class="" style="left:609.7px;top:572.0px;width:10.6px;height:10.6px;background:#B8A188;border-radius:50%"></div>
<div class="" style="left:609.7px;top:624.7px;width:10.6px;height:10.6px;background:#B8A188;border-radius:50%"></div>
<div class="" style="left:609.7px;top:908.5px;width:10.6px;height:10.6px;background:#B8A188;border-radius:50%"></div>
<span class="t" style="left:869.3px;top:194.4px;font-size:26px;color:#5E4A30;letter-spacing:-0.40px;">AGENDA</span>
<span class="t b" style="left:584.6px;top:247.5px;font-size:46px;color:#4A2F14;letter-spacing:-1.30px;transform:scaleX(0.9659);">PERSONAL</span>
<span class="t b" style="left:638.5px;top:356.1px;font-size:32px;color:#5B4023;letter-spacing:-0.63px;">empty the dishwasher</span>
<span class="t b" style="left:640.5px;top:409.1px;font-size:32px;color:#5B4023;letter-spacing:-1.30px;transform:scaleX(0.9778);">write an article addendum about</span>
<span class="t b" style="left:638.7px;top:457.4px;font-size:32px;color:#5B4023;letter-spacing:-1.30px;transform:scaleX(0.9211);">salt prayer story</span>
<span class="t b" style="left:638.6px;top:510.7px;font-size:32px;color:#5B4023;letter-spacing:-1.30px;transform:scaleX(0.9255);">pack up kid art as birthday gift</span>
<span class="t b" style="left:638.7px;top:563.3px;font-size:32px;color:#5B4023;letter-spacing:-1.30px;transform:scaleX(0.9229);">clean table</span>
<span class="t b" style="left:637.6px;top:616.0px;font-size:32px;color:#5B4023;letter-spacing:-1.30px;transform:scaleX(0.9730);">reply to facebook marketplace /</span>
<span class="t b" style="left:617.4px;top:662.5px;font-size:32px;color:#5B4023;letter-spacing:-1.30px;transform:scaleX(0.9688);">buy nothing group pings</span>
<span class="t b" style="left:584.0px;top:791.5px;font-size:46px;color:#4A2F14;letter-spacing:-1.30px;transform:scaleX(0.8727);">INBOX</span>
<span class="t b" style="left:638.6px;top:899.8px;font-size:32px;color:#5B4023;letter-spacing:-1.30px;transform:scaleX(0.9745);">Extract atomic claim notes from</span>
<span class="t b" style="left:638.6px;top:947.8px;font-size:32px;color:#5B4023;letter-spacing:-1.30px;transform:scaleX(0.9385);">published articles, cross-</span>
<span class="t b" style="left:637.6px;top:996.1px;font-size:32px;color:#5B4023;letter-spacing:-1.30px;transform:scaleX(0.9608);">reference recurring claims (#6)</span>
</article>
<article id="pane-prayers-in-salt">
<div class="pane" style="left:1325.5px;top:169.5px;width:790.5px;height:871.5px;"></div>
<div class="hdrline" style="left:1327.5px;top:239.7px;width:786.5px;height:2.0px;"></div>
<svg class="ic" style="left:1366.3px;top:193.1px;width:25px;height:25px;color:#E1D8CD" viewBox="0 0 24 24" fill="none" stroke="currentColor" stroke-width="1.8" stroke-linecap="round" stroke-linejoin="round"><path d="M19 12H5"/><path d="m11 6-6 6 6 6"/></svg>
<svg class="ic" style="left:1418.2px;top:193.1px;width:25px;height:25px;color:#E1D8CD" viewBox="0 0 24 24" fill="none" stroke="currentColor" stroke-width="1.8" stroke-linecap="round" stroke-linejoin="round"><path d="M5 12h14"/><path d="m13 6 6 6-6 6"/></svg>
<svg class="ic" style="left:1991.5px;top:188.5px;width:35px;height:35px;color:#B09A82" viewBox="0 0 24 24" fill="none" stroke="currentColor" stroke-width="1.75" stroke-linecap="round" stroke-linejoin="round"><circle cx="6.500" cy="16" r="4"/><circle cx="17.500" cy="16" r="4"/><path d="M10.500 16a1.500 1.500 0 0 1 3 0"/><path d="M2.500 16V6.500A3.500 3.500 0 0 1 6 3h.5"/><path d="M21.500 16V6.500A3.500 3.500 0 0 0 18 3h-.5"/></svg>
<svg class="ic" style="left:2044.0px;top:186.6px;width:38px;height:38px;color:#B09A82" viewBox="0 0 24 24" fill="none" stroke="currentColor" stroke-width="2" stroke-linecap="round" stroke-linejoin="round"><circle cx="4" cy="12" r="1.500" fill="currentColor" stroke="none"/><circle cx="12" cy="12" r="1.500" fill="currentColor" stroke="none"/><circle cx="20" cy="12" r="1.500" fill="currentColor" stroke="none"/></svg>
<div class="" style="left:1414.6px;top:327.5px;width:10.6px;height:10.6px;background:#B8A188;border-radius:50%"></div>
<div class="" style="left:1414.6px;top:476.7px;width:10.6px;height:10.6px;background:#B8A188;border-radius:50%"></div>
<div class="" style="left:1414.6px;top:529.1px;width:10.6px;height:10.6px;background:#B8A188;border-radius:50%"></div>
<div class="" style="left:1414.6px;top:582.5px;width:10.6px;height:10.6px;background:#B8A188;border-radius:50%"></div>
<span class="t" style="left:1482.1px;top:194.4px;font-size:26px;color:#8E7B63;letter-spacing:-1.30px;transform:scaleX(0.8414);">narrat...</span>
<span class="t" style="left:1606.0px;top:194.4px;font-size:26px;color:#DDD0C0;">/</span>
<span class="t" style="left:1632.0px;top:194.4px;font-size:26px;color:#8E7B63;letter-spacing:-1.30px;transform:scaleX(0.8200);">verra...</span>
<span class="t" style="left:1742.6px;top:194.4px;font-size:26px;color:#DDD0C0;">/</span>
<span class="t" style="left:1766.4px;top:194.4px;font-size:26px;color:#5E4A30;letter-spacing:-1.30px;transform:scaleX(0.9378);">Prayers in Salt</span>
<span class="t b" style="left:1442.8px;top:318.8px;font-size:32px;color:#5B4023;letter-spacing:-1.30px;transform:scaleX(0.9672);">Pitch:: A salt merchant discovers</span>
<span class="t b" style="left:1442.8px;top:367.1px;font-size:32px;color:#5B4023;letter-spacing:-1.30px;transform:scaleX(0.9729);">her cargo can hear the prayers</span>
<span class="t b" style="left:1442.8px;top:414.6px;font-size:32px;color:#5B4023;letter-spacing:-1.30px;transform:scaleX(0.9471);">pilgrims embedded in it</span>
<span class="t b" style="left:1442.8px;top:468.0px;font-size:32px;color:#5B4023;letter-spacing:-1.30px;transform:scaleX(0.9587);">Universe:: Verraine</span>
<span class="t b" style="left:1442.8px;top:520.4px;font-size:32px;color:#5B4023;letter-spacing:-1.30px;transform:scaleX(0.9680);">MICE Type:: Inquiry</span>
<span class="t b" style="left:1443.8px;top:573.8px;font-size:32px;color:#5B4023;letter-spacing:-1.30px;transform:scaleX(0.9306);">Source:: Original, Verraine</span>
<span class="t b" style="left:1444.7px;top:622.4px;font-size:32px;color:#5B4023;letter-spacing:-1.30px;transform:scaleX(0.9157);">worldbuilding</span>
<span class="t b" style="left:1389.8px;top:719.5px;font-size:32px;color:#5B4023;letter-spacing:-1.30px;transform:scaleX(0.9635);">Korinna discovered the prayers on the</span>
<span class="t b" style="left:1389.8px;top:767.8px;font-size:32px;color:#5B4023;letter-spacing:-1.30px;transform:scaleX(0.9742);">third day out from port, when the</span>
<span class="t b" style="left:1389.8px;top:816.0px;font-size:32px;color:#5B4023;letter-spacing:-1.30px;transform:scaleX(0.9605);">salt in her hold began to hum.</span>
<span class="t b" style="left:1390.7px;top:911.8px;font-size:32px;color:#5B4023;letter-spacing:-1.30px;transform:scaleX(0.9594);">She pressed her ear against a burlap</span>
<span class="t b" style="left:1389.7px;top:959.7px;font-size:32px;color:#5B4023;letter-spacing:-0.94px;">sack and heard whispers — dozens of</span>
<span class="t b" style="left:1390.7px;top:1007.3px;font-size:32px;color:#5B4023;letter-spacing:-1.30px;transform:scaleX(0.9819);">voices, overlapping, desperate.</span>
</article>
<nav id="tabs-terminal">
<div class="tab" style="left:553.7px;top:1057.0px;width:398.8px;height:64.2px;"></div>
<svg class="ic" style="left:568.8px;top:1073.2px;width:34px;height:34px;color:#D7952F" viewBox="0 0 24 24" fill="none" stroke="currentColor" stroke-width="1.6" stroke-linecap="round" stroke-linejoin="round"><rect x="3" y="3.500" width="18" height="17" rx="2.500"/><path d="m7.300 8.300 2.400 2.400-2.400 2.400"/><path d="M12 14.800h4"/></svg>
<svg class="ic" style="left:751.7px;top:1076.4px;width:26.5px;height:26.5px" viewBox="0 0 26 26"><rect x=".5" y=".5" width="25" height="25" rx="5.500" fill="#23BF47"/><rect x=".5" y=".5" width="25" height="25" rx="5.500" fill="none" stroke="#16993A" stroke-width="1"/><g stroke="#fff" stroke-width="2.600" stroke-linecap="round"><path d="M13 5.500v15M5.500 13h15M7.700 7.700l10.600 10.600M18.300 7.700 7.700 18.300"/></g><circle cx="13" cy="13" r="2.600" fill="#23BF47"/></svg>
<svg class="ic" style="left:912.8px;top:1076.0px;width:25px;height:25px;color:#D7952F" viewBox="0 0 24 24" fill="none" stroke="currentColor" stroke-width="1.7" stroke-linecap="round" stroke-linejoin="round"><path d="M12 17v5"/><path d="M8 3h8"/><path d="M9 3v6.500L6 14v2h12v-2l-3-4.500V3"/></svg>
<svg class="ic" style="left:967.0px;top:1079.0px;width:26px;height:26px;color:#B09A82" viewBox="0 0 24 24" fill="none" stroke="currentColor" stroke-width="1.7" stroke-linecap="round" stroke-linejoin="round"><path d="M12 5v14"/><path d="M5 12h14"/></svg>
<svg class="ic" style="left:2046.2px;top:1077.4px;width:28px;height:28px;color:#B09A82" viewBox="0 0 24 24" fill="none" stroke="currentColor" stroke-width="1.8" stroke-linecap="round" stroke-linejoin="round"><path d="m5 8.500 7 7 7-7"/></svg>
<span class="t" style="left:613.0px;top:1078.5px;font-size:26px;color:#D7952F;letter-spacing:-1.30px;transform:scaleX(0.9781);">Terminal:</span>
<span class="t" style="left:788.4px;top:1078.5px;font-size:26px;color:#D7952F;letter-spacing:-1.30px;transform:scaleX(0.8822);">Prayer...</span>
</nav>
<main id="pane-terminal">
<div class="pane" style="left:520.5px;top:1134.5px;width:1595.5px;height:769.0px;"></div>
<div class="hdrline" style="left:522.5px;top:1182.0px;width:1591.5px;height:2.0px;"></div>
<svg class="ic" style="left:561.5px;top:1145.7px;width:25px;height:25px;color:#E1D8CD" viewBox="0 0 24 24" fill="none" stroke="currentColor" stroke-width="1.8" stroke-linecap="round" stroke-linejoin="round"><path d="M19 12H5"/><path d="m11 6-6 6 6 6"/></svg>
<svg class="ic" style="left:613.5px;top:1145.7px;width:25px;height:25px;color:#E1D8CD" viewBox="0 0 24 24" fill="none" stroke="currentColor" stroke-width="1.8" stroke-linecap="round" stroke-linejoin="round"><path d="M5 12h14"/><path d="m13 6 6 6-6 6"/></svg>
<svg class="ic" style="left:1230.7px;top:1145.5px;width:26.5px;height:26.5px" viewBox="0 0 26 26"><rect x=".5" y=".5" width="25" height="25" rx="5.500" fill="#23BF47"/><rect x=".5" y=".5" width="25" height="25" rx="5.500" fill="none" stroke="#16993A" stroke-width="1"/><g stroke="#fff" stroke-width="2.600" stroke-linecap="round"><path d="M13 5.500v15M5.500 13h15M7.700 7.700l10.600 10.600M18.300 7.700 7.700 18.300"/></g><circle cx="13" cy="13" r="2.600" fill="#23BF47"/></svg>
<svg class="ic" style="left:2044.5px;top:1139.2px;width:38px;height:38px;color:#B09A82" viewBox="0 0 24 24" fill="none" stroke="currentColor" stroke-width="2" stroke-linecap="round" stroke-linejoin="round"><circle cx="4" cy="12" r="1.500" fill="currentColor" stroke="none"/><circle cx="12" cy="12" r="1.500" fill="currentColor" stroke="none"/><circle cx="20" cy="12" r="1.500" fill="currentColor" stroke="none"/></svg>
<div class="" style="left:573.0px;top:1242.2px;width:108.0px;height:68.0px;background:#D98383"></div>
<div class="" style="left:555.0px;top:1276.2px;width:144.0px;height:17.0px;background:#D98383"></div>
<div class="" style="left:582.0px;top:1310.2px;width:9.0px;height:17.0px;background:#D98383"></div>
<div class="" style="left:600.0px;top:1310.2px;width:9.0px;height:17.0px;background:#D98383"></div>
<div class="" style="left:645.0px;top:1310.2px;width:9.0px;height:17.0px;background:#D98383"></div>
<div class="" style="left:663.0px;top:1310.2px;width:9.0px;height:17.0px;background:#D98383"></div>
<div class="" style="left:591.0px;top:1259.2px;width:9.0px;height:17.0px;background:#000"></div>
<div class="" style="left:654.0px;top:1259.2px;width:9.0px;height:17.0px;background:#000"></div>
<div class="" style="left:546.0px;top:1378.2px;width:180.0px;height:34.0px;background:#3B3B3B"></div>
<div class="" style="left:595.0px;top:1414.2px;width:2.0px;height:28.0px;background:#fff"></div>
<div class="" style="left:595.0px;top:1440.2px;width:18.0px;height:2.0px;background:#fff"></div>
<div class="" style="left:546.0px;top:1480.2px;width:1440.0px;height:306.0px;background:#3B3B3B"></div>
<div class="" style="left:546.6px;top:1828.2px;width:17.6px;height:17.6px;background:#fff;border-radius:50%"></div>
<span class="t" style="left:1091.2px;top:1147.0px;font-size:26px;color:#5E4A30;letter-spacing:-1.13px;">Terminal:</span>
<span class="t" style="left:1266.6px;top:1147.0px;font-size:26px;color:#5E4A30;letter-spacing:-1.30px;transform:scaleX(0.9702);">Prayers in Salt Research</span>
<span class="t b" style="left:744.0px;top:1245.7px;font-size:30px;color:#5A3E22;font-weight:700;-webkit-text-stroke:0;">Claude Code</span>
<span class="t b" style="left:960.0px;top:1245.7px;font-size:30px;color:#9B9B9B;-webkit-text-stroke:.7px;">v2.1.12</span>
<span class="t b" style="left:744.0px;top:1279.7px;font-size:30px;color:#9B9B9B;-webkit-text-stroke:.7px;">Opus 4.5 · Claude Max</span>
<span class="t b" style="left:744.0px;top:1313.7px;font-size:30px;color:#9B9B9B;-webkit-text-stroke:.7px;">~/Documents/life/slipbox</span>
<span class="t b" style="left:546.0px;top:1381.7px;font-size:30px;color:#5a5a5a;-webkit-text-stroke:.7px;">❯</span>
<span class="t b" style="left:582.0px;top:1381.7px;font-size:30px;color:#fff;-webkit-text-stroke:.7px;">/skills</span>
<span class="t b" style="left:636.0px;top:1415.7px;font-size:30px;color:#5A3E22;-webkit-text-stroke:.7px;">Skills dialog dismissed</span>
<span class="t b" style="left:546.0px;top:1483.7px;font-size:30px;color:#5a5a5a;-webkit-text-stroke:.7px;">❯</span>
<span class="t b" style="left:582.0px;top:1483.7px;font-size:30px;color:#fff;-webkit-text-stroke:.7px;">help me find notes relevant to the `Prayers in Salt` story in</span>
<span class="t b" style="left:582.0px;top:1517.7px;font-size:30px;color:#fff;-webkit-text-stroke:.7px;">narrative/verraine. I&#x27;m especially looking for things I&#x27;ve said in the past</span>
<span class="t b" style="left:582.0px;top:1551.7px;font-size:30px;color:#fff;-webkit-text-stroke:.7px;">about the value of currency, an article I read once about how charities used</span>
<span class="t b" style="left:582.0px;top:1585.7px;font-size:30px;color:#fff;-webkit-text-stroke:.7px;">fake money to help allocate resources, the history of salt, food as currency,</span>
<span class="t b" style="left:582.0px;top:1619.7px;font-size:30px;color:#fff;-webkit-text-stroke:.7px;">and other sources. Update the YAML of this file to match my other YAML</span>
<span class="t b" style="left:582.0px;top:1653.7px;font-size:30px;color:#fff;-webkit-text-stroke:.7px;">patterns, especially with the related links. Put all of the related</span>
<span class="t b" style="left:582.0px;top:1687.7px;font-size:30px;color:#fff;-webkit-text-stroke:.7px;">information in YAML at the top, and move the dataview key:pairs to YAML for</span>
<span class="t b" style="left:582.0px;top:1721.7px;font-size:30px;color:#fff;-webkit-text-stroke:.7px;">better use with bases. Spin out OPUS subagents to accomplish these tasks, and</span>
<span class="t b" style="left:582.0px;top:1755.7px;font-size:30px;color:#fff;-webkit-text-stroke:.7px;">make sure to ask any clarifying questions right away.</span>
<span class="t b" style="left:582.0px;top:1823.7px;font-size:30px;color:#5A3E22;-webkit-text-stroke:.7px;">I&#x27;ll help you find relevant notes and update the YAML for the Prayers in Salt</span>
</main>
<aside id="sidebar-backlinks">
<svg class="ic" style="left:2147.9px;top:105.5px;width:35px;height:35px;color:#B09A82" viewBox="0 0 24 24" fill="none" stroke="currentColor" stroke-width="1.75" stroke-linecap="round" stroke-linejoin="round"><g transform="translate(0 3.600) scale(.84)"><path d="M12.586 2.586A2 2 0 0 0 11.172 2H4a2 2 0 0 0-2 2v7.172a2 2 0 0 0 .586 1.414l8.704 8.704a2.426 2.426 0 0 0 3.420 0l6.580-6.580a2.426 2.426 0 0 0 0-3.420z"/><circle cx="7.500" cy="7.500" r=".7" fill="currentColor"/></g><path d="M5.800 2.400h6.200a2 2 0 0 1 1.400.6l7.700 7.700a2.400 2.400 0 0 1 0 3.400l-.8.8"/></svg>
<svg class="ic" style="left:2218.0px;top:105.0px;width:38px;height:38px;color:#B09A82" viewBox="0 0 24 24" fill="none" stroke="currentColor" stroke-width="1.8" stroke-linecap="round" stroke-linejoin="round"><rect x="3" y="4" width="18" height="16" rx="3.500"/><path d="M7.300 8.500h.01M7.300 12h.01M7.300 15.500h.01"/><path d="M10.800 8.500h6M10.800 12h6M10.800 15.500h6"/></svg>
<svg class="ic" style="left:2291.0px;top:106.0px;width:36px;height:36px;color:#B09A82" viewBox="0 0 24 24" fill="none" stroke="currentColor" stroke-width="1.8" stroke-linecap="round" stroke-linejoin="round"><rect x="3" y="4.500" width="18" height="16.500" rx="3.500"/><path d="M3 10h18"/><path d="M8 2.500v4M16 2.500v4"/><rect x="7" y="13.500" width="3" height="3" rx=".8"/></svg>
<div class="tab" style="left:2348.8px;top:92.4px;width:65.1px;height:60.2px;border-radius:8px"></div>
<svg class="ic" style="left:2363.0px;top:103.0px;width:36px;height:36px;color:#5B4023" viewBox="0 0 24 24" fill="none" stroke="currentColor" stroke-width="1.75" stroke-linecap="round" stroke-linejoin="round"><g transform="translate(.4 0) scale(.8)"><path d="M10 13a5 5 0 0 0 7.540.540l3-3a5 5 0 0 0-7.070-7.070l-1.720 1.710"/><path d="M14 11a5 5 0 0 0-7.540-.540l-3 3a5 5 0 0 0 7.070 7.070l1.710-1.710"/></g><path d="M22 18.500h-6.500"/><path d="m18.300 15.700-2.800 2.800 2.800 2.800"/></svg>
<svg class="ic" style="left:2433.6px;top:105.0px;width:36px;height:36px;color:#B09A82" viewBox="0 0 24 24" fill="none" stroke="currentColor" stroke-width="1.8" stroke-linecap="round" stroke-linejoin="round"><g transform="translate(.4 0) scale(.8)"><path d="M10 13a5 5 0 0 0 7.540.540l3-3a5 5 0 0 0-7.070-7.070l-1.720 1.710"/><path d="M14 11a5 5 0 0 0-7.540-.540l-3 3a5 5 0 0 0 7.070 7.070l1.710-1.710"/></g><path d="M15.500 18.500H22"/><path d="m19.200 15.700 2.800 2.800-2.800 2.800"/></svg>
<svg class="ic" style="left:2871.0px;top:106.6px;width:36px;height:36px;color:#B9A38A" viewBox="0 0 24 24" fill="none" stroke="currentColor" stroke-width="1.8" stroke-linecap="round" stroke-linejoin="round"><rect x="2" y="4" width="20" height="16" rx="3.800"/><rect x="14.400" y="7.300" width="4" height="9.400" rx="1.500" fill="currentColor" stroke="none"/></svg>
<div class="" style="left:2144.1px;top:177.8px;width:53.8px;height:53.3px;background:#E8DACB;border-radius:9px"></div>
<svg class="ic" style="left:2152.0px;top:185.5px;width:38px;height:38px;color:#8E7B63" viewBox="0 0 24 24" fill="none" stroke="currentColor" stroke-width="1.7" stroke-linecap="round" stroke-linejoin="round"><rect x="3" y="4" width="18" height="16" rx="3.500"/><path d="M7.300 8.500h.01M7.300 12h.01M7.300 15.500h.01"/><path d="M10.800 8.500h6M10.800 12h6M10.800 15.500h6"/></svg>
<svg class="ic" style="left:2215.5px;top:187.5px;width:35px;height:35px;color:#B09A82" viewBox="0 0 24 24" fill="none" stroke="currentColor" stroke-width="1.8" stroke-linecap="round" stroke-linejoin="round"><path d="M12 2.500v19"/><path d="m8 6.500 4-4 4 4"/><path d="m8 17.500 4 4 4-4"/></svg>
<svg class="ic" style="left:2277.1px;top:187.5px;width:35px;height:35px;color:#B09A82" viewBox="0 0 24 24" fill="none" stroke="currentColor" stroke-width="1.8" stroke-linecap="round" stroke-linejoin="round"><path d="m2.800 6.800 3.200-3.800 3.200 3.800"/><path d="M6 3v18"/><path d="M11 8.500h3"/><path d="M11 12.500h5.500"/><path d="M11 16.500h8"/><path d="M11 20.500h10.500"/></svg>
<svg class="ic" style="left:2339.2px;top:188.0px;width:34px;height:34px;color:#B09A82" viewBox="0 0 24 24" fill="none" stroke="currentColor" stroke-width="1.7" stroke-linecap="round" stroke-linejoin="round"><circle cx="10.500" cy="10.500" r="7.500"/><path d="m21.500 21.500-5.600-5.600"/></svg>
<svg class="ic" style="left:2152.2px;top:323.8px;width:27px;height:27px;color:#C4AE95" viewBox="0 0 24 24" fill="none" stroke="currentColor" stroke-width="2.3" stroke-linecap="round" stroke-linejoin="round"><path d="m5 8.500 7 7 7-7"/></svg>
<div class="" style="left:2141.3px;top:370.8px;width:765.7px;height:65.4px;background:#F3ECE5;border:2px solid #E6DACC;border-radius:18px"></div>
<div class="" style="left:2288.0px;top:387.3px;width:143.5px;height:31.4px;background:#FAE3BF"></div>
<span class="t" style="left:2155.0px;top:264.8px;font-size:22px;color:#7B6549;letter-spacing:1.60px;">LINKED MENTIONS</span>
<span class="t" style="left:2868.0px;top:264.8px;font-size:22px;color:#B5A089;">1</span>
<span class="t" style="left:2191.0px;top:326.0px;font-size:26px;color:#6B5233;letter-spacing:-1.30px;transform:scaleX(0.9879);">ARCHIVE</span>
<span class="t" style="left:2868.0px;top:329.5px;font-size:22px;color:#B5A089;">1</span>
<span class="t" style="left:2165.1px;top:393.2px;font-size:24px;color:#7B6549;letter-spacing:-1.30px;transform:scaleX(0.9480);">relarted:</span>
<span class="t" style="left:2288.0px;top:393.2px;font-size:24px;color:#5B4023;letter-spacing:0.04px;">[[AGENDA]]</span>
<span class="t" style="left:2156.0px;top:499.1px;font-size:22px;color:#7B6549;letter-spacing:1.61px;">UNLINKED MENTIONS</span>
</aside>
<footer id="statusbar">
<div class="" style="left:2115.7px;top:1870.9px;width:830.0px;height:70.0px;background:#EFE6DE;border:1.600px solid #E5D8CA;border-radius:18px 0 0 0"></div>
<svg class="ic" style="left:2880px;top:1880px;width:52px;height:44px" viewBox="2880 1880 52 44"><path d="M2933 1889C2933 1916 2923 1924.500 2894 1925L2940 1930V1889z" fill="#4a453b" stroke="#14110d" stroke-width="2"/></svg>
<svg class="ic" style="left:0;top:1910px;width:14px;height:14px" viewBox="0 1910 14 14"><path d="M-1 1914.500C0 1920 3 1923.500 9.500 1925L-1 1925z" fill="#15130f"/></svg>
<svg class="ic" style="left:2281.4px;top:1881.5px;width:31px;height:31px;color:#B5A089" viewBox="0 0 24 24" fill="none" stroke="currentColor" stroke-width="1.6" stroke-linecap="round" stroke-linejoin="round"><path d="M17.500 3.500a2.100 2.100 0 0 1 3 3L8 19l-4.500 1.500L5 16z"/><path d="m15.500 5.500 3 3"/><path d="m3.500 20.500-1 1"/></svg>
<svg class="ic" style="left:2722.5px;top:1883.5px;width:29px;height:29px;color:#C0392B" viewBox="0 0 24 24" fill="none" stroke="currentColor" stroke-width="2" stroke-linecap="round" stroke-linejoin="round"><path d="M21 8 18.740 5.740A9.750 9.750 0 0 0 12 3c-1 0-1.970.160-2.870.470"/><path d="M8 16H3v5"/><path d="M3 12c0-2.490 1-4.740 2.640-6.360"/><path d="m3 16 2.260 2.260A9.750 9.750 0 0 0 12 21c2.490 0 4.740-1 6.360-2.640"/><path d="M21 12c0 1-.160 1.970-.470 2.870"/><path d="M21 3v5h-5"/><path d="M22 22 2 2"/></svg>
<span class="t" style="left:2131.0px;top:1888.1px;font-size:24px;color:#B5A089;letter-spacing:-1.30px;transform:scaleX(0.9624);">1 backlink</span>
<span class="t" style="left:2336.0px;top:1888.1px;font-size:24px;color:#B5A089;letter-spacing:-0.49px;">250 words 1,701 characters</span>
<span class="t" style="left:2775.8px;top:1888.1px;font-size:24px;color:#B5A089;letter-spacing:-1.30px;transform:scaleX(0.8487);">0 files</span>
<span class="t" style="left:2880.4px;top:1888.1px;font-size:24px;color:#B5A089;letter-spacing:-1.30px;transform:scaleX(0.9815);border-bottom:2px dotted #B5A089;padding-bottom:0;line-height:.95;">Aa</span>
</footer>
</div>
</body></html>
